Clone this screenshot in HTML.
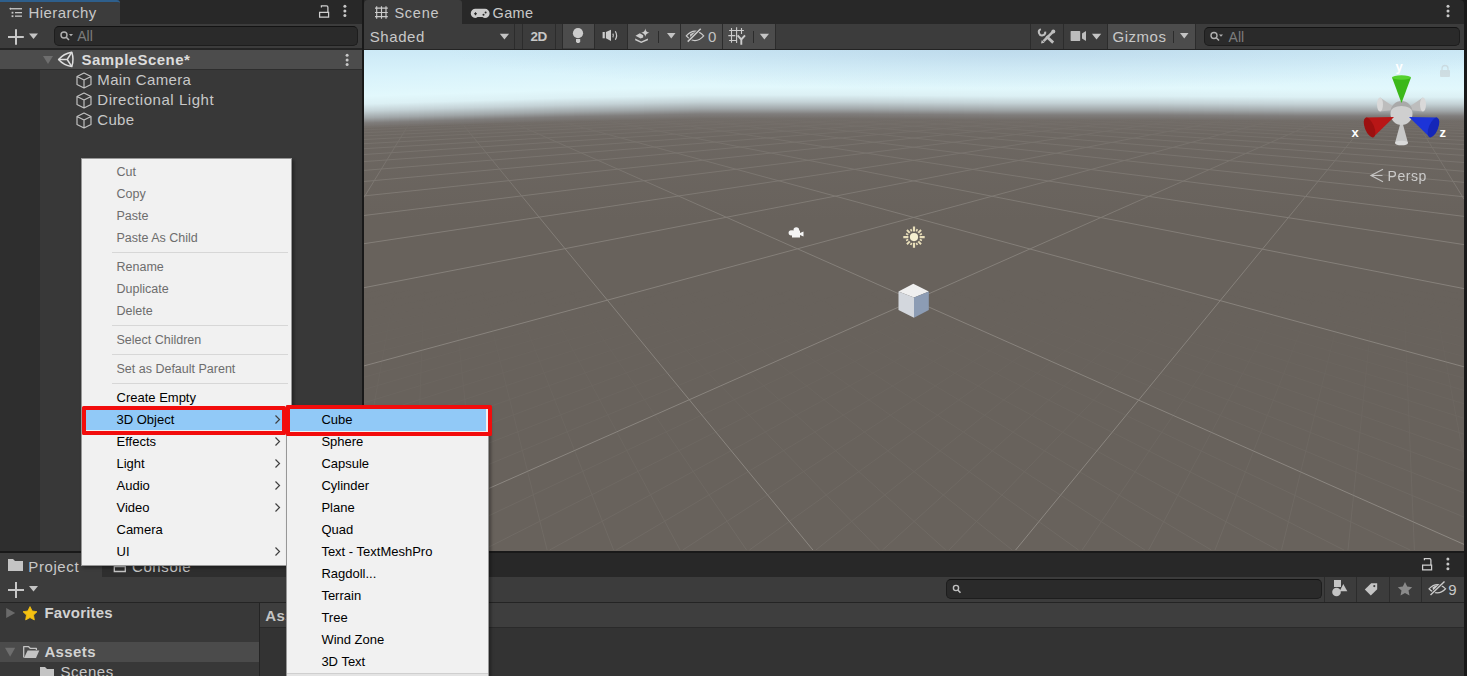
<!DOCTYPE html>
<html><head><meta charset="utf-8">
<style>
*{box-sizing:border-box;margin:0;padding:0}
html,body{width:1467px;height:676px;overflow:hidden}
body{position:relative;background:#191919;font-family:"Liberation Sans",sans-serif;color:#c4c4c4}
.a{position:absolute}
.t{position:absolute;white-space:pre;line-height:1;font-size:14px}
svg{position:absolute;overflow:visible}
.menu{position:absolute;background:#f1f1f1;border:1px solid #979797;box-shadow:2px 2px 3px rgba(0,0,0,0.35)}
.mi{position:absolute;white-space:pre;font-size:13px;line-height:1;color:#000}
.dis{color:#6d6d6d}
.sep{position:absolute;height:1px;background:#d7d7d7}
</style></head><body>

<!-- ================= HIERARCHY ================= -->
<div class="a" style="left:0;top:0;width:362px;height:24px;background:#282828"></div>
<div class="a" style="left:0;top:0;width:120px;height:24px;background:#3c3c3c;border-top:2px solid #2e5f8c;border-top-right-radius:3px"></div>
<svg style="left:0;top:0" width="40" height="24">
  <g fill="#c8c8c8"><path d="M9 8.7l2-1.3v2.6z"/><rect x="10.5" y="8.1" width="11.5" height="1.3"/>
  <rect x="11.6" y="11.8" width="1.8" height="1.8"/><rect x="15" y="12" width="7" height="1.3"/>
  <rect x="11.6" y="15.3" width="1.8" height="1.8"/><rect x="15" y="15.5" width="7" height="1.3"/></g>
</svg>
<svg style="left:0;top:0" width="362" height="24">
  <path d="M319.6 12.4h9v4.6h-9z M327.9 12.4V7.2Q327.9 5.8 326.5 5.8H321.4V7.4" fill="none" stroke="#cfcfcf" stroke-width="1.25"/>
  <g fill="#c8c8c8"><circle cx="344.9" cy="6.3" r="1.5"/><circle cx="344.9" cy="10.9" r="1.5"/><circle cx="344.9" cy="15.5" r="1.5"/></g>
</svg>
<div class="a" style="left:0;top:24px;width:362px;height:25px;background:#3c3c3c;border-bottom:1px solid #242424"></div>
<svg style="left:0;top:24px" width="54" height="25">
  <path d="M16 5.2v15.5M8 13h15.8" stroke="#c8c8c8" stroke-width="2"/>
  <path d="M29 9.5h9l-4.5 5.5z" fill="#c4c4c4"/>
</svg>
<div class="a" style="left:54px;top:26px;width:304px;height:20px;background:#2a2a2a;border:1px solid #1d1d1d;border-top-color:#131313;border-radius:5px"></div>
<svg style="left:54px;top:26px" width="30" height="20">
  <circle cx="10" cy="9" r="3" fill="none" stroke="#b0b0b0" stroke-width="1.4"/>
  <path d="M12 11l3 3" stroke="#b0b0b0" stroke-width="1.6"/>
  <path d="M15 8h4l-2 2.2z" fill="#b0b0b0"/>
</svg>

<div class="a" style="left:0;top:48px;width:362px;height:2px;background:#242424"></div>
<div class="a" style="left:0;top:50px;width:362px;height:20px;background:#4c4c4c;border-bottom:1px solid #2d2d2d"></div>
<svg style="left:0;top:49px" width="362" height="20">
  <path d="M43 7h10l-5 8z" fill="#6e6e6e"/>
  <g fill="none" stroke="#dedede" stroke-width="1.5" stroke-linejoin="round">
    <path d="M58.6 10.5Q63.5 4.6 71.8 3.2Q74.2 10.4 71.8 17.6Q63.5 16.2 58.6 10.5Z"/>
    <path d="M58.6 10.5H67.2L71.8 3.2M67.2 10.5L71.8 17.6"/>
  </g>
  <g fill="#c8c8c8"><circle cx="347.1" cy="6.3" r="1.5"/><circle cx="347.1" cy="10.9" r="1.5"/><circle cx="347.1" cy="15.6" r="1.5"/></g>
</svg>

<div class="a" style="left:0;top:70px;width:40px;height:481px;background:#2e2e2e"></div>
<div class="a" style="left:40px;top:70px;width:322px;height:481px;background:#383838"></div>
<svg style="left:0;top:70px" width="100" height="60">
  <g fill="none" stroke="#c0c0c0" stroke-width="1.2" stroke-linejoin="round"><path transform="translate(76 1.5)" d="M8 1.5L15 5V13L8 16.5L1 13V5Z M1 5L8 8.5L15 5 M8 8.5V16.5"/><path transform="translate(76 21.5)" d="M8 1.5L15 5V13L8 16.5L1 13V5Z M1 5L8 8.5L15 5 M8 8.5V16.5"/><path transform="translate(76 41.5)" d="M8 1.5L15 5V13L8 16.5L1 13V5Z M1 5L8 8.5L15 5 M8 8.5V16.5"/></g>
</svg>

<!-- ================= SCENE ================= -->
<div class="a" style="left:364px;top:0;width:1100px;height:24px;background:#282828;border-top-right-radius:4px"></div>
<div class="a" style="left:364px;top:0;width:98px;height:24px;background:#3c3c3c;border-top-left-radius:4px;border-top-right-radius:3px"></div>
<svg style="left:364px;top:0" width="200" height="24">
  <path d="M12.7 6.3v12.5M17.5 6.3v12.5M22 6.3v12.5M11 8.1h12.8M11 12.5h12.8M11 16.6h12.8" stroke="#cccccc" stroke-width="1.15"/>
  <g fill="#cccccc">
    <path d="M111.5 8.8H121A4.6 4.6 0 0 1 121 18Q119.5 18 118.5 17H113.5Q112.5 18 111.2 18A4.6 4.6 0 0 1 111.5 8.8Z"/>
  </g>
  <g stroke="#282828" stroke-width="1.1"><path d="M111.5 12.2v3M110 13.7h3"/></g>
  <g fill="#282828"><circle cx="119.5" cy="14.7" r="1"/><circle cx="121.6" cy="12.6" r="1"/></g>
</svg>
<svg style="left:1440px;top:0" width="20" height="24">
  <g fill="#c8c8c8"><circle cx="8" cy="6.2" r="1.5"/><circle cx="8" cy="11.1" r="1.5"/><circle cx="8" cy="15.8" r="1.5"/></g>
</svg>

<div class="a" style="left:364px;top:24px;width:1100px;height:26px;background:#3c3c3c;border-bottom:1px solid #232323"></div>
<!-- toolbar dividers & button bgs -->
<div class="a" style="left:514px;top:24px;width:1px;height:25px;background:#2c2c2c"></div>
<div class="a" style="left:522px;top:24px;width:1px;height:25px;background:#2c2c2c"></div>
<div class="a" style="left:555px;top:24px;width:1px;height:25px;background:#2c2c2c"></div>
<div class="a" style="left:562px;top:24px;width:1px;height:25px;background:#2c2c2c"></div>
<div class="a" style="left:563px;top:24px;width:31px;height:24px;background:#4c4c4c"></div>
<div class="a" style="left:594px;top:24px;width:1px;height:25px;background:#2c2c2c"></div>
<div class="a" style="left:627px;top:24px;width:1px;height:25px;background:#2c2c2c"></div>
<div class="a" style="left:628px;top:24px;width:52px;height:25px;background:#4c4c4c"></div>
<div class="a" style="left:680px;top:24px;width:1px;height:25px;background:#2c2c2c"></div>
<div class="a" style="left:681px;top:24px;width:41px;height:25px;background:#4c4c4c"></div>
<div class="a" style="left:722px;top:24px;width:1px;height:25px;background:#2c2c2c"></div>
<div class="a" style="left:723px;top:24px;width:52px;height:25px;background:#4c4c4c"></div>
<div class="a" style="left:775px;top:24px;width:1px;height:25px;background:#2c2c2c"></div>
<div class="a" style="left:1030px;top:24px;width:1px;height:25px;background:#2c2c2c"></div>
<div class="a" style="left:1063px;top:24px;width:1px;height:25px;background:#2c2c2c"></div>
<div class="a" style="left:1107px;top:24px;width:1px;height:25px;background:#2c2c2c"></div>
<div class="a" style="left:1108px;top:24px;width:87px;height:25px;background:#4c4c4c"></div>
<div class="a" style="left:1195px;top:24px;width:1px;height:25px;background:#2c2c2c"></div>


<svg style="left:0;top:24px" width="1467" height="25">
  <g fill="#c4c4c4">
    <path d="M499.8 9.8h9.3l-4.65 5.7z"/>
    <path d="M667 9h8.5l-4.25 5.5z"/>
    <path d="M759.8 9.8h9.2l-4.6 5.6z"/>
    <path d="M1091.9 9.8h9.3l-4.65 5.7z"/>
    <path d="M1180 9h8.5l-4.25 5.5z"/>
  </g>
  <g stroke="#2c2c2c" stroke-width="1"><path d="M658.5 7v12M753.5 7v12M1173.5 7v12"/></g>
  <!-- bulb -->
  <g fill="#cccccc"><circle cx="578" cy="9.2" r="5.1"/><path d="M576 14.9h4.2v2.8l-1.1 1.3h-2l-1.1-1.3z"/></g>
  <!-- audio -->
  <g fill="#cccccc"><rect x="602.6" y="8" width="2.2" height="6.3"/><path d="M605.9 8L611 5.7V17L605.9 14.3Z"/></g>
  <g fill="none" stroke="#cccccc" stroke-width="1.2"><path d="M612.8 9.6q1.3 1.9 0 3.8"/><path d="M615.3 7.2q2.6 4.3 0 8.6"/></g>
  <!-- effects -->
  <g fill="#cccccc"><path d="M635.2 14.6L641.2 17.6L647.9 14.4V16.2L641.2 19L635.2 16.2Z"/><path d="M635.5 11.8L639.8 9.2L643.2 11.2V13.6L640.6 14.6Z"/><path d="M645.3 4.5Q645.8 8.2 649.4 8.8Q645.8 9.4 645.3 12.7Q644.8 9.4 641.2 8.8Q644.8 8.2 645.3 4.5Z"/></g>
  <!-- eye slash -->
  <g fill="none" stroke="#cccccc" stroke-width="1.25"><path d="M686.3 11.9Q695 2.5 703.7 11.9Q695 21.3 686.3 11.9Z"/></g>
  <path d="M690 10.5Q693 7.5 697 8L691.5 14.5Q689.8 12.5 690 10.5Z" fill="#cccccc"/>
  <path d="M687.7 17.6L700.7 4.8" stroke="#4c4c4c" stroke-width="3"/>
  <path d="M687.7 17.6L700.7 4.8" stroke="#cccccc" stroke-width="1.5"/>
  <!-- grid Y -->
  <g stroke="#cccccc" stroke-width="1.1" fill="none"><path d="M731.5 4.1V18.7M736.6 3.2V19M741.5 4V10M729.1 6.5H743.9M728.3 11.6H735.3M729.1 16.5H736.5"/></g>
  <g stroke="#cccccc" stroke-width="1.9" fill="none"><path d="M737.6 11.3L741.3 15.5L745 11.3M741.3 15.2V20.7"/></g>
  <!-- tools -->
  <g stroke="#bdbdbd" fill="none"><path d="M1046.3 12.2L1053.2 18.6" stroke-width="2.8"/><path d="M1052.6 8.2L1043.6 17.2" stroke-width="2.6"/>
  <path d="M1040.8 5.2A3.2 3.2 0 1 0 1045.2 7.6" stroke-width="2"/></g>
  <g fill="#bdbdbd"><circle cx="1053.3" cy="7.6" r="2"/><path d="M1041 19.6L1041.8 16L1044.6 18.8Z"/></g>
  <!-- camera -->
  <g fill="#bdbdbd"><rect x="1070.6" y="7.1" width="9.6" height="9.8" rx="0.6"/><path d="M1082 9.4L1086 7.1V17L1082 14.6Z"/></g>
</svg>

<div class="a" style="left:1204px;top:26.5px;width:256px;height:19.5px;background:#2a2a2a;border:1px solid #1d1d1d;border-top-color:#131313;border-radius:5px"></div>
<svg style="left:1204px;top:27px" width="30" height="19">
  <circle cx="10" cy="8.5" r="3" fill="none" stroke="#b0b0b0" stroke-width="1.4"/>
  <path d="M12 10.5l3 3" stroke="#b0b0b0" stroke-width="1.6"/>
  <path d="M15 7.5h4l-2 2.2z" fill="#b0b0b0"/>
</svg>

<!-- viewport -->
<div class="a" style="left:364px;top:50px;width:1100px;height:501px;overflow:hidden;background:#68625c">
</div>
<svg style="left:0;top:0" width="1467" height="676">
  <defs>
    <linearGradient id="gg" x1="0" y1="0" x2="0" y2="1" gradientUnits="objectBoundingBox">
      <stop offset="0" stop-color="#000"/>
      <stop offset="0.04" stop-color="#101010"/>
      <stop offset="0.0887" stop-color="#6a6a6a"/>
      <stop offset="0.2217" stop-color="#a8a8a8"/>
      <stop offset="0.4435" stop-color="#d8d8d8"/>
      <stop offset="1" stop-color="#fff"/>
    </linearGradient>
    <mask id="gm" maskUnits="userSpaceOnUse" x="364" y="50" width="1100" height="501">
      <rect x="364" y="100" width="1100" height="451" fill="url(#gg)"/>
    </mask>
    <linearGradient id="gg2" x1="0" y1="0" x2="0" y2="1">
      <stop offset="0" stop-color="#000"/>
      <stop offset="0.35" stop-color="#2a2a2a"/>
      <stop offset="1" stop-color="#6a6a6a"/>
    </linearGradient>
    <mask id="gm2" maskUnits="userSpaceOnUse" x="364" y="50" width="1100" height="501">
      <rect x="364" y="290" width="1100" height="261" fill="url(#gg2)"/>
    </mask>
  </defs>
<g mask="url(#gm)" stroke="#8d8882" stroke-width="1" fill="none">
<path d="M426.6 87.3L364.0 95.3 M427.5 87.3L364.0 97.3 M428.5 87.3L364.0 100.4 M429.5 87.3L364.0 106.1 M430.4 87.3L364.0 119.7 M431.4 87.3L364.0 197.4 M432.3 87.3L812.9 550.0 M433.3 87.3L1464.0 544.4 M434.3 87.3L1464.0 366.8 M435.2 87.3L1464.0 288.6 M436.2 87.3L1464.0 244.6 M437.1 87.3L1464.0 216.4 M438.1 87.3L1464.0 196.8 M439.0 87.3L1464.0 182.4 M440.0 87.3L1464.0 171.3 M440.9 87.3L1464.0 162.5 M441.8 87.3L1464.0 155.4 M442.8 87.3L1464.0 149.5 M443.7 87.3L1464.0 144.6 M444.7 87.3L1464.0 140.4 M445.6 87.3L1464.0 136.7 M446.5 87.3L1464.0 133.6 M447.5 87.3L1464.0 130.8 M448.4 87.3L1464.0 128.3 M449.3 87.3L1464.0 126.1 M450.2 87.3L1464.0 124.1 M451.2 87.3L1464.0 122.4 M452.1 87.3L1464.0 120.7 M453.0 87.3L1464.0 119.3 M453.9 87.3L1464.0 117.9 M454.8 87.3L1464.0 116.7 M455.7 87.3L1464.0 115.5 M456.7 87.3L1464.0 114.5 M457.6 87.3L1464.0 113.5 M458.5 87.3L1464.0 112.6 M459.4 87.3L1464.0 111.7 M460.3 87.3L1464.0 110.9 M461.2 87.3L1464.0 110.2 M462.1 87.3L1464.0 109.5 M463.0 87.3L1464.0 108.8 M463.9 87.3L1464.0 108.2 M464.8 87.3L1464.0 107.6 M465.7 87.3L1464.0 107.1 M466.6 87.3L1464.0 106.5 M467.5 87.3L1464.0 106.0 M468.4 87.3L1464.0 105.6 M469.2 87.3L1464.0 105.1 M470.1 87.3L1464.0 104.7 M471.0 87.3L1464.0 104.3 M471.9 87.3L1464.0 103.9 M472.8 87.3L1464.0 103.5 M473.7 87.3L1464.0 103.2 M474.5 87.3L1464.0 102.8 M475.4 87.3L1464.0 102.5 M476.3 87.3L1464.0 102.2 M477.2 87.3L1464.0 101.9 M478.0 87.3L1464.0 101.6 M478.9 87.3L1464.0 101.3 M479.8 87.3L1464.0 101.1 M480.6 87.3L1464.0 100.8 M481.5 87.3L1464.0 100.6 M482.4 87.3L1464.0 100.3 M483.2 87.3L1464.0 100.1 M484.1 87.3L1464.0 99.9 M484.9 87.3L1464.0 99.7 M485.8 87.3L1464.0 99.5 M486.7 87.3L1464.0 99.3 M487.5 87.3L1464.0 99.1 M488.4 87.3L1464.0 98.9 M489.2 87.3L1464.0 98.7 M490.1 87.3L1464.0 98.5 M490.9 87.3L1464.0 98.4 M491.8 87.3L1464.0 98.2 M492.6 87.3L1464.0 98.0 M493.4 87.3L1464.0 97.9 M494.3 87.3L1464.0 97.7 M495.1 87.3L1464.0 97.6 M496.0 87.3L1464.0 97.4 M496.8 87.3L1464.0 97.3 M497.6 87.3L1464.0 97.2 M498.5 87.3L1464.0 97.0 M499.3 87.3L1464.0 96.9 M500.1 87.3L1464.0 96.8 M500.9 87.3L1464.0 96.7 M501.8 87.3L1464.0 96.5 M502.6 87.3L1464.0 96.4 M503.4 87.3L1464.0 96.3 M504.2 87.3L1464.0 96.2 M505.1 87.3L1464.0 96.1 M505.9 87.3L1464.0 96.0 M506.7 87.3L1464.0 95.9 M507.5 87.3L1464.0 95.8 M508.3 87.3L1464.0 95.7 M509.1 87.3L1464.0 95.6 M510.0 87.3L1464.0 95.5 M510.8 87.3L1464.0 95.4 M364.0 96.5L1330.0 87.9 M364.0 96.6L1330.8 87.9 M364.0 96.8L1331.6 87.9 M364.0 96.9L1332.5 87.9 M364.0 97.1L1333.3 87.9 M364.0 97.2L1334.2 87.9 M364.0 97.4L1335.0 87.9 M364.0 97.6L1335.9 87.9 M364.0 97.7L1336.7 87.9 M364.0 97.9L1337.6 87.9 M364.0 98.1L1338.4 87.9 M364.0 98.3L1339.3 87.9 M364.0 98.5L1340.1 87.9 M364.0 98.7L1341.0 87.9 M364.0 98.9L1341.8 87.9 M364.0 99.1L1342.7 87.9 M364.0 99.3L1343.6 87.9 M364.0 99.5L1344.4 87.9 M364.0 99.8L1345.3 87.9 M364.0 100.0L1346.2 87.9 M364.0 100.3L1347.0 88.0 M364.0 100.5L1347.9 88.0 M364.0 100.8L1348.8 88.0 M364.0 101.1L1349.6 88.0 M364.0 101.4L1350.5 88.0 M364.0 101.7L1351.4 88.0 M364.0 102.0L1352.3 88.0 M364.0 102.4L1353.2 88.0 M364.0 102.7L1354.0 88.0 M364.0 103.1L1354.9 88.0 M364.0 103.5L1355.8 88.0 M364.0 103.9L1356.7 88.0 M364.0 104.3L1357.6 88.0 M364.0 104.8L1358.5 88.0 M364.0 105.2L1359.4 88.0 M364.0 105.7L1360.3 88.0 M364.0 106.2L1361.2 88.0 M364.0 106.8L1362.1 88.0 M364.0 107.4L1363.0 88.0 M364.0 108.0L1363.9 88.0 M364.0 108.7L1364.8 88.0 M364.0 109.4L1365.7 88.0 M364.0 110.1L1366.6 88.0 M364.0 110.9L1367.5 88.0 M364.0 111.7L1368.4 88.0 M364.0 112.7L1369.3 88.0 M364.0 113.6L1370.2 88.0 M364.0 114.7L1371.1 88.0 M364.0 115.8L1372.0 88.0 M364.0 117.1L1373.0 88.0 M364.0 118.4L1373.9 88.0 M364.0 119.9L1374.8 88.0 M364.0 121.5L1375.7 88.0 M364.0 123.3L1376.7 88.0 M364.0 125.3L1377.6 88.0 M364.0 127.5L1378.5 88.0 M364.0 129.9L1379.4 88.0 M364.0 132.7L1380.4 88.0 M364.0 135.9L1381.3 88.0 M364.0 139.5L1382.2 88.0 M364.0 143.7L1383.2 88.0 M364.0 148.7L1384.1 88.0 M364.0 154.5L1385.1 88.0 M364.0 161.6L1386.0 88.0 M364.0 170.4L1387.0 88.0 M364.0 181.5L1387.9 88.0 M364.0 195.9L1388.9 88.0 M364.0 215.5L1389.8 88.0 M364.0 243.7L1390.8 88.0 M364.0 287.7L1391.7 88.0 M364.0 365.9L1392.7 88.0 M364.0 543.7L1393.6 88.0 M1015.6 550.0L1394.6 88.0 M1464.0 199.2L1395.6 88.0 M1464.0 121.0L1396.5 88.0 M1464.0 107.1L1397.5 88.0 M1464.0 101.4L1398.5 88.0 M1464.0 98.2L1399.4 88.0 M1464.0 96.2L1400.4 88.0 M1464.0 94.9L1401.4 88.0 M1464.0 93.9L1402.4 88.0 M1464.0 93.1L1403.3 88.0"/>
</g>
<g mask="url(#gm2)" stroke="#7c7771" stroke-width="1" fill="none"><path d="M424.7 87.3L364.0 93.1 M364.0 155.2L1385.2 88.0 M424.8 87.3L364.0 93.2 M364.0 155.8L1385.3 88.0 M424.9 87.3L364.0 93.2 M364.0 156.5L1385.3 88.0 M425.0 87.3L364.0 93.3 M364.0 157.2L1385.4 88.0 M425.1 87.3L364.0 93.4 M364.0 157.9L1385.5 88.0 M425.2 87.3L364.0 93.5 M364.0 158.6L1385.6 88.0 M425.3 87.3L364.0 93.6 M364.0 159.4L1385.7 88.0 M425.4 87.3L364.0 93.7 M364.0 160.1L1385.8 88.0 M425.5 87.3L364.0 93.9 M364.0 160.9L1385.9 88.0 M425.7 87.3L364.0 94.1 M364.0 162.4L1386.1 88.0 M425.8 87.3L364.0 94.2 M364.0 163.2L1386.2 88.0 M425.9 87.3L364.0 94.3 M364.0 164.1L1386.3 88.0 M426.0 87.3L364.0 94.5 M364.0 164.9L1386.4 88.0 M426.1 87.3L364.0 94.6 M364.0 165.8L1386.5 88.0 M426.2 87.3L364.0 94.7 M364.0 166.7L1386.6 88.0 M426.3 87.3L364.0 94.9 M364.0 167.6L1386.7 88.0 M426.4 87.3L364.0 95.0 M364.0 168.5L1386.8 88.0 M426.5 87.3L364.0 95.2 M364.0 169.4L1386.9 88.0 M426.7 87.3L364.0 95.5 M364.0 171.4L1387.1 88.0 M426.8 87.3L364.0 95.7 M364.0 172.4L1387.1 88.0 M426.8 87.3L364.0 95.8 M364.0 173.4L1387.2 88.0 M426.9 87.3L364.0 96.0 M364.0 174.5L1387.3 88.0 M427.0 87.3L364.0 96.2 M364.0 175.6L1387.4 88.0 M427.1 87.3L364.0 96.4 M364.0 176.7L1387.5 88.0 M427.2 87.3L364.0 96.6 M364.0 177.8L1387.6 88.0 M427.3 87.3L364.0 96.8 M364.0 179.0L1387.7 88.0 M427.4 87.3L364.0 97.0 M364.0 180.2L1387.8 88.0 M427.6 87.3L364.0 97.5 M364.0 182.7L1388.0 88.0 M427.7 87.3L364.0 97.8 M364.0 184.0L1388.1 88.0 M427.8 87.3L364.0 98.1 M364.0 185.4L1388.2 88.0 M427.9 87.3L364.0 98.3 M364.0 186.7L1388.3 88.0 M428.0 87.3L364.0 98.6 M364.0 188.2L1388.4 88.0 M428.1 87.3L364.0 99.0 M364.0 189.6L1388.5 88.0 M428.2 87.3L364.0 99.3 M364.0 191.1L1388.6 88.0 M428.3 87.3L364.0 99.6 M364.0 192.7L1388.7 88.0 M428.4 87.3L364.0 100.0 M364.0 194.3L1388.8 88.0 M428.6 87.3L364.0 100.8 M364.0 197.6L1388.9 88.0 M428.7 87.3L364.0 101.3 M364.0 199.3L1389.0 88.0 M428.8 87.3L364.0 101.7 M364.0 201.1L1389.1 88.0 M428.9 87.3L364.0 102.2 M364.0 203.0L1389.2 88.0 M429.0 87.3L364.0 102.8 M364.0 204.9L1389.3 88.0 M429.1 87.3L364.0 103.3 M364.0 206.9L1389.4 88.0 M429.2 87.3L364.0 103.9 M364.0 208.9L1389.5 88.0 M429.3 87.3L364.0 104.6 M364.0 211.0L1389.6 88.0 M429.4 87.3L364.0 105.3 M364.0 213.2L1389.7 88.0 M429.6 87.3L364.0 106.9 M364.0 217.9L1389.9 88.0 M429.7 87.3L364.0 107.8 M364.0 220.3L1390.0 88.0 M429.7 87.3L364.0 108.8 M364.0 222.8L1390.1 88.0 M429.8 87.3L364.0 109.9 M364.0 225.5L1390.2 88.0 M429.9 87.3L364.0 111.1 M364.0 228.2L1390.3 88.0 M430.0 87.3L364.0 112.5 M364.0 231.1L1390.4 88.0 M430.1 87.3L364.0 114.0 M364.0 234.0L1390.5 88.0 M430.2 87.3L364.0 115.7 M364.0 237.1L1390.6 88.0 M430.3 87.3L364.0 117.6 M364.0 240.3L1390.7 88.0 M430.5 87.3L364.0 122.2 M364.0 247.2L1390.9 88.0 M430.6 87.3L364.0 125.1 M364.0 250.9L1390.9 88.0 M430.7 87.3L364.0 128.5 M364.0 254.7L1391.0 88.0 M430.8 87.3L364.0 132.6 M364.0 258.8L1391.1 88.0 M430.9 87.3L364.0 137.6 M364.0 263.0L1391.2 88.0 M431.0 87.3L364.0 143.8 M364.0 267.4L1391.3 88.0 M431.1 87.3L364.0 151.6 M364.0 272.1L1391.4 88.0 M431.2 87.3L364.0 162.0 M364.0 277.0L1391.5 88.0 M431.3 87.3L364.0 176.3 M364.0 282.2L1391.6 88.0 M431.5 87.3L364.0 231.3 M364.0 293.5L1391.8 88.0 M431.6 87.3L364.0 295.1 M364.0 299.6L1391.9 88.0 M431.7 87.3L364.0 460.0 M364.0 306.1L1392.0 88.0 M431.8 87.3L414.2 550.0 M364.0 313.1L1392.1 88.0 M431.9 87.3L480.7 550.0 M364.0 320.4L1392.2 88.0 M432.0 87.3L547.1 550.0 M364.0 328.3L1392.3 88.0 M432.1 87.3L613.6 550.0 M364.0 336.7L1392.4 88.0 M432.2 87.3L680.1 550.0 M364.0 345.7L1392.5 88.0 M432.3 87.3L746.5 550.0 M364.0 355.4L1392.6 88.0 M432.4 87.3L879.4 550.0 M364.0 377.2L1392.8 88.0 M432.5 87.3L945.8 550.0 M364.0 389.5L1392.9 88.0 M432.6 87.3L1012.2 550.0 M364.0 402.8L1393.0 88.0 M432.7 87.3L1078.5 550.0 M364.0 417.4L1393.1 88.0 M432.8 87.3L1144.9 550.0 M364.0 433.3L1393.2 88.0 M432.9 87.3L1211.3 550.0 M364.0 450.9L1393.2 88.0 M433.0 87.3L1277.6 550.0 M364.0 470.4L1393.3 88.0 M433.1 87.3L1343.9 550.0 M364.0 492.1L1393.4 88.0 M433.2 87.3L1410.2 550.0 M364.0 516.3L1393.5 88.0 M433.4 87.3L1464.0 517.1 M416.3 550.0L1393.7 88.0 M433.5 87.3L1464.0 492.9 M483.0 550.0L1393.8 88.0 M433.6 87.3L1464.0 471.3 M549.6 550.0L1393.9 88.0 M433.7 87.3L1464.0 451.8 M616.2 550.0L1394.0 88.0 M433.8 87.3L1464.0 434.2 M682.8 550.0L1394.1 88.0 M433.9 87.3L1464.0 418.3 M749.4 550.0L1394.2 88.0 M434.0 87.3L1464.0 403.7 M815.9 550.0L1394.3 88.0 M434.1 87.3L1464.0 390.4 M882.5 550.0L1394.4 88.0 M434.2 87.3L1464.0 378.1 M949.0 550.0L1394.5 88.0 M434.4 87.3L1464.0 356.4 M1082.1 550.0L1394.7 88.0 M434.5 87.3L1464.0 346.7 M1148.6 550.0L1394.8 88.0 M434.5 87.3L1464.0 337.7 M1215.0 550.0L1394.9 88.0 M434.6 87.3L1464.0 329.3 M1281.5 550.0L1395.0 88.0 M434.7 87.3L1464.0 321.4 M1348.0 550.0L1395.1 88.0 M434.8 87.3L1464.0 314.0 M1414.4 550.0L1395.2 88.0 M434.9 87.3L1464.0 307.1 M1464.0 459.1L1395.3 88.0 M435.0 87.3L1464.0 300.6 M1464.0 296.8L1395.4 88.0 M435.1 87.3L1464.0 294.4 M1464.0 233.1L1395.5 88.0 M435.3 87.3L1464.0 283.2 M1464.0 178.0L1395.7 88.0 M435.4 87.3L1464.0 278.0 M1464.0 163.6L1395.7 88.0 M435.5 87.3L1464.0 273.1 M1464.0 153.2L1395.8 88.0 M435.6 87.3L1464.0 268.4 M1464.0 145.2L1395.9 88.0 M435.7 87.3L1464.0 263.9 M1464.0 139.0L1396.0 88.0 M435.8 87.3L1464.0 259.7 M1464.0 134.0L1396.1 88.0 M435.9 87.3L1464.0 255.7 M1464.0 129.9L1396.2 88.0 M436.0 87.3L1464.0 251.8 M1464.0 126.4L1396.3 88.0 M436.1 87.3L1464.0 248.2 M1464.0 123.5L1396.4 88.0"/></g>
</svg>
<div class="a" style="left:364px;top:50px;width:1100px;height:200px;overflow:hidden">
<div class="a" style="left:0;top:60px;width:1100px;height:140px;background:linear-gradient(to bottom,rgba(125,120,117,0.6) 0px,rgba(118,113,109,0.35) 25px,rgba(102,97,91,0) 110px)"></div>
<div class="a" style="left:0px;top:0;width:5px;height:79px;background:linear-gradient(to bottom,rgba(204,233,246,1) 0.0px,rgba(217,243,251,1) 25.9px,rgba(226,248,252,1) 45.9px,rgba(220,240,244,1) 53.9px,rgba(196,210,214,1) 60.9px,rgba(160,166,168,1) 67.9px,rgba(128,126,125,0.95) 72.9px,rgba(112,107,103,0.3) 77.9px,rgba(110,105,101,0) 80.9px)"></div>
<div class="a" style="left:5px;top:0;width:5px;height:79px;background:linear-gradient(to bottom,rgba(204,233,246,1) 0.0px,rgba(217,243,251,1) 25.8px,rgba(226,248,252,1) 45.8px,rgba(220,240,244,1) 53.8px,rgba(196,210,214,1) 60.8px,rgba(160,166,168,1) 67.8px,rgba(128,126,125,0.95) 72.8px,rgba(112,107,103,0.3) 77.8px,rgba(110,105,101,0) 80.8px)"></div>
<div class="a" style="left:10px;top:0;width:5px;height:79px;background:linear-gradient(to bottom,rgba(204,233,246,1) 0.0px,rgba(217,243,251,1) 25.6px,rgba(226,248,252,1) 45.6px,rgba(220,240,244,1) 53.6px,rgba(196,210,214,1) 60.6px,rgba(160,166,168,1) 67.6px,rgba(128,126,125,0.95) 72.6px,rgba(112,107,103,0.3) 77.6px,rgba(110,105,101,0) 80.6px)"></div>
<div class="a" style="left:15px;top:0;width:5px;height:79px;background:linear-gradient(to bottom,rgba(204,233,246,1) 0.0px,rgba(217,243,251,1) 25.5px,rgba(226,248,252,1) 45.5px,rgba(220,240,244,1) 53.5px,rgba(196,210,214,1) 60.5px,rgba(160,166,168,1) 67.5px,rgba(128,126,125,0.95) 72.5px,rgba(112,107,103,0.3) 77.5px,rgba(110,105,101,0) 80.5px)"></div>
<div class="a" style="left:20px;top:0;width:5px;height:79px;background:linear-gradient(to bottom,rgba(204,233,246,1) 0.0px,rgba(217,243,251,1) 25.3px,rgba(226,248,252,1) 45.3px,rgba(220,240,244,1) 53.3px,rgba(196,210,214,1) 60.3px,rgba(160,166,168,1) 67.3px,rgba(128,126,125,0.95) 72.3px,rgba(112,107,103,0.3) 77.3px,rgba(110,105,101,0) 80.3px)"></div>
<div class="a" style="left:25px;top:0;width:5px;height:79px;background:linear-gradient(to bottom,rgba(204,233,246,1) 0.0px,rgba(217,243,251,1) 25.1px,rgba(226,248,252,1) 45.1px,rgba(220,240,244,1) 53.1px,rgba(196,210,214,1) 60.1px,rgba(160,166,168,1) 67.1px,rgba(128,126,125,0.95) 72.1px,rgba(112,107,103,0.3) 77.1px,rgba(110,105,101,0) 80.1px)"></div>
<div class="a" style="left:30px;top:0;width:5px;height:78px;background:linear-gradient(to bottom,rgba(204,233,246,1) 0.0px,rgba(217,243,251,1) 25.0px,rgba(226,248,252,1) 45.0px,rgba(220,240,244,1) 53.0px,rgba(196,210,214,1) 60.0px,rgba(160,166,168,1) 67.0px,rgba(128,126,125,0.95) 72.0px,rgba(112,107,103,0.3) 77.0px,rgba(110,105,101,0) 80.0px)"></div>
<div class="a" style="left:35px;top:0;width:5px;height:78px;background:linear-gradient(to bottom,rgba(204,233,246,1) 0.0px,rgba(217,243,251,1) 24.8px,rgba(226,248,252,1) 44.8px,rgba(220,240,244,1) 52.8px,rgba(196,210,214,1) 59.8px,rgba(160,166,168,1) 66.8px,rgba(128,126,125,0.95) 71.8px,rgba(112,107,103,0.3) 76.8px,rgba(110,105,101,0) 79.8px)"></div>
<div class="a" style="left:40px;top:0;width:5px;height:78px;background:linear-gradient(to bottom,rgba(204,233,246,1) 0.0px,rgba(217,243,251,1) 24.7px,rgba(226,248,252,1) 44.7px,rgba(220,240,244,1) 52.7px,rgba(196,210,214,1) 59.7px,rgba(160,166,168,1) 66.7px,rgba(128,126,125,0.95) 71.7px,rgba(112,107,103,0.3) 76.7px,rgba(110,105,101,0) 79.7px)"></div>
<div class="a" style="left:45px;top:0;width:5px;height:78px;background:linear-gradient(to bottom,rgba(204,233,246,1) 0.0px,rgba(217,243,251,1) 24.5px,rgba(226,248,252,1) 44.5px,rgba(220,240,244,1) 52.5px,rgba(196,210,214,1) 59.5px,rgba(160,166,168,1) 66.5px,rgba(128,126,125,0.95) 71.5px,rgba(112,107,103,0.3) 76.5px,rgba(110,105,101,0) 79.5px)"></div>
<div class="a" style="left:50px;top:0;width:5px;height:78px;background:linear-gradient(to bottom,rgba(204,233,246,1) 0.0px,rgba(217,243,251,1) 24.4px,rgba(226,248,252,1) 44.4px,rgba(220,240,244,1) 52.4px,rgba(196,210,214,1) 59.4px,rgba(160,166,168,1) 66.4px,rgba(128,126,125,0.95) 71.4px,rgba(112,107,103,0.3) 76.4px,rgba(110,105,101,0) 79.4px)"></div>
<div class="a" style="left:55px;top:0;width:5px;height:78px;background:linear-gradient(to bottom,rgba(204,233,246,1) 0.0px,rgba(217,243,251,1) 24.2px,rgba(226,248,252,1) 44.2px,rgba(220,240,244,1) 52.2px,rgba(196,210,214,1) 59.2px,rgba(160,166,168,1) 66.2px,rgba(128,126,125,0.95) 71.2px,rgba(112,107,103,0.3) 76.2px,rgba(110,105,101,0) 79.2px)"></div>
<div class="a" style="left:60px;top:0;width:5px;height:78px;background:linear-gradient(to bottom,rgba(204,233,246,1) 0.0px,rgba(217,243,251,1) 24.0px,rgba(226,248,252,1) 44.0px,rgba(220,240,244,1) 52.0px,rgba(196,210,214,1) 59.0px,rgba(160,166,168,1) 66.0px,rgba(128,126,125,0.95) 71.0px,rgba(112,107,103,0.3) 76.0px,rgba(110,105,101,0) 79.0px)"></div>
<div class="a" style="left:65px;top:0;width:5px;height:77px;background:linear-gradient(to bottom,rgba(204,233,246,1) 0.0px,rgba(217,243,251,1) 23.9px,rgba(226,248,252,1) 43.9px,rgba(220,240,244,1) 51.9px,rgba(196,210,214,1) 58.9px,rgba(160,166,168,1) 65.9px,rgba(128,126,125,0.95) 70.9px,rgba(112,107,103,0.3) 75.9px,rgba(110,105,101,0) 78.9px)"></div>
<div class="a" style="left:70px;top:0;width:5px;height:77px;background:linear-gradient(to bottom,rgba(204,233,246,1) 0.0px,rgba(217,243,251,1) 23.7px,rgba(226,248,252,1) 43.7px,rgba(220,240,244,1) 51.7px,rgba(196,210,214,1) 58.7px,rgba(160,166,168,1) 65.7px,rgba(128,126,125,0.95) 70.7px,rgba(112,107,103,0.3) 75.7px,rgba(110,105,101,0) 78.7px)"></div>
<div class="a" style="left:75px;top:0;width:5px;height:77px;background:linear-gradient(to bottom,rgba(204,233,246,1) 0.0px,rgba(217,243,251,1) 23.6px,rgba(226,248,252,1) 43.6px,rgba(220,240,244,1) 51.6px,rgba(196,210,214,1) 58.6px,rgba(160,166,168,1) 65.6px,rgba(128,126,125,0.95) 70.6px,rgba(112,107,103,0.3) 75.6px,rgba(110,105,101,0) 78.6px)"></div>
<div class="a" style="left:80px;top:0;width:5px;height:77px;background:linear-gradient(to bottom,rgba(204,233,246,1) 0.0px,rgba(217,243,251,1) 23.4px,rgba(226,248,252,1) 43.4px,rgba(220,240,244,1) 51.4px,rgba(196,210,214,1) 58.4px,rgba(160,166,168,1) 65.4px,rgba(128,126,125,0.95) 70.4px,rgba(112,107,103,0.3) 75.4px,rgba(110,105,101,0) 78.4px)"></div>
<div class="a" style="left:85px;top:0;width:5px;height:77px;background:linear-gradient(to bottom,rgba(204,233,246,1) 0.0px,rgba(217,243,251,1) 23.3px,rgba(226,248,252,1) 43.3px,rgba(220,240,244,1) 51.3px,rgba(196,210,214,1) 58.3px,rgba(160,166,168,1) 65.3px,rgba(128,126,125,0.95) 70.3px,rgba(112,107,103,0.3) 75.3px,rgba(110,105,101,0) 78.3px)"></div>
<div class="a" style="left:90px;top:0;width:5px;height:77px;background:linear-gradient(to bottom,rgba(204,233,246,1) 0.0px,rgba(217,243,251,1) 23.1px,rgba(226,248,252,1) 43.1px,rgba(220,240,244,1) 51.1px,rgba(196,210,214,1) 58.1px,rgba(160,166,168,1) 65.1px,rgba(128,126,125,0.95) 70.1px,rgba(112,107,103,0.3) 75.1px,rgba(110,105,101,0) 78.1px)"></div>
<div class="a" style="left:95px;top:0;width:5px;height:76px;background:linear-gradient(to bottom,rgba(204,233,246,1) 0.0px,rgba(217,243,251,1) 23.0px,rgba(226,248,252,1) 43.0px,rgba(220,240,244,1) 51.0px,rgba(196,210,214,1) 58.0px,rgba(160,166,168,1) 65.0px,rgba(128,126,125,0.95) 70.0px,rgba(112,107,103,0.3) 75.0px,rgba(110,105,101,0) 78.0px)"></div>
<div class="a" style="left:100px;top:0;width:5px;height:76px;background:linear-gradient(to bottom,rgba(204,233,246,1) 0.0px,rgba(217,243,251,1) 22.8px,rgba(226,248,252,1) 42.8px,rgba(220,240,244,1) 50.8px,rgba(196,210,214,1) 57.8px,rgba(160,166,168,1) 64.8px,rgba(128,126,125,0.95) 69.8px,rgba(112,107,103,0.3) 74.8px,rgba(110,105,101,0) 77.8px)"></div>
<div class="a" style="left:105px;top:0;width:5px;height:76px;background:linear-gradient(to bottom,rgba(204,233,246,1) 0.0px,rgba(217,243,251,1) 22.7px,rgba(226,248,252,1) 42.7px,rgba(220,240,244,1) 50.7px,rgba(196,210,214,1) 57.7px,rgba(160,166,168,1) 64.7px,rgba(128,126,125,0.95) 69.7px,rgba(112,107,103,0.3) 74.7px,rgba(110,105,101,0) 77.7px)"></div>
<div class="a" style="left:110px;top:0;width:5px;height:76px;background:linear-gradient(to bottom,rgba(204,233,246,1) 0.0px,rgba(217,243,251,1) 22.5px,rgba(226,248,252,1) 42.5px,rgba(220,240,244,1) 50.5px,rgba(196,210,214,1) 57.5px,rgba(160,166,168,1) 64.5px,rgba(128,126,125,0.95) 69.5px,rgba(112,107,103,0.3) 74.5px,rgba(110,105,101,0) 77.5px)"></div>
<div class="a" style="left:115px;top:0;width:5px;height:76px;background:linear-gradient(to bottom,rgba(204,233,246,1) 0.0px,rgba(217,243,251,1) 22.4px,rgba(226,248,252,1) 42.4px,rgba(220,240,244,1) 50.4px,rgba(196,210,214,1) 57.4px,rgba(160,166,168,1) 64.4px,rgba(128,126,125,0.95) 69.4px,rgba(112,107,103,0.3) 74.4px,rgba(110,105,101,0) 77.4px)"></div>
<div class="a" style="left:120px;top:0;width:5px;height:76px;background:linear-gradient(to bottom,rgba(204,233,246,1) 0.0px,rgba(217,243,251,1) 22.2px,rgba(226,248,252,1) 42.2px,rgba(220,240,244,1) 50.2px,rgba(196,210,214,1) 57.2px,rgba(160,166,168,1) 64.2px,rgba(128,126,125,0.95) 69.2px,rgba(112,107,103,0.3) 74.2px,rgba(110,105,101,0) 77.2px)"></div>
<div class="a" style="left:125px;top:0;width:5px;height:76px;background:linear-gradient(to bottom,rgba(204,233,246,1) 0.0px,rgba(217,243,251,1) 22.1px,rgba(226,248,252,1) 42.1px,rgba(220,240,244,1) 50.1px,rgba(196,210,214,1) 57.1px,rgba(160,166,168,1) 64.1px,rgba(128,126,125,0.95) 69.1px,rgba(112,107,103,0.3) 74.1px,rgba(110,105,101,0) 77.1px)"></div>
<div class="a" style="left:130px;top:0;width:5px;height:75px;background:linear-gradient(to bottom,rgba(204,233,246,1) 0.0px,rgba(217,243,251,1) 21.9px,rgba(226,248,252,1) 41.9px,rgba(220,240,244,1) 49.9px,rgba(196,210,214,1) 56.9px,rgba(160,166,168,1) 63.9px,rgba(128,126,125,0.95) 68.9px,rgba(112,107,103,0.3) 73.9px,rgba(110,105,101,0) 76.9px)"></div>
<div class="a" style="left:135px;top:0;width:5px;height:75px;background:linear-gradient(to bottom,rgba(204,233,246,1) 0.0px,rgba(217,243,251,1) 21.8px,rgba(226,248,252,1) 41.8px,rgba(220,240,244,1) 49.8px,rgba(196,210,214,1) 56.8px,rgba(160,166,168,1) 63.8px,rgba(128,126,125,0.95) 68.8px,rgba(112,107,103,0.3) 73.8px,rgba(110,105,101,0) 76.8px)"></div>
<div class="a" style="left:140px;top:0;width:5px;height:75px;background:linear-gradient(to bottom,rgba(204,233,246,1) 0.0px,rgba(217,243,251,1) 21.6px,rgba(226,248,252,1) 41.6px,rgba(220,240,244,1) 49.6px,rgba(196,210,214,1) 56.6px,rgba(160,166,168,1) 63.6px,rgba(128,126,125,0.95) 68.6px,rgba(112,107,103,0.3) 73.6px,rgba(110,105,101,0) 76.6px)"></div>
<div class="a" style="left:145px;top:0;width:5px;height:75px;background:linear-gradient(to bottom,rgba(204,233,246,1) 0.0px,rgba(217,243,251,1) 21.5px,rgba(226,248,252,1) 41.5px,rgba(220,240,244,1) 49.5px,rgba(196,210,214,1) 56.5px,rgba(160,166,168,1) 63.5px,rgba(128,126,125,0.95) 68.5px,rgba(112,107,103,0.3) 73.5px,rgba(110,105,101,0) 76.5px)"></div>
<div class="a" style="left:150px;top:0;width:5px;height:75px;background:linear-gradient(to bottom,rgba(204,233,246,1) 0.0px,rgba(217,243,251,1) 21.3px,rgba(226,248,252,1) 41.3px,rgba(220,240,244,1) 49.3px,rgba(196,210,214,1) 56.3px,rgba(160,166,168,1) 63.3px,rgba(128,126,125,0.95) 68.3px,rgba(112,107,103,0.3) 73.3px,rgba(110,105,101,0) 76.3px)"></div>
<div class="a" style="left:155px;top:0;width:5px;height:75px;background:linear-gradient(to bottom,rgba(204,233,246,1) 0.0px,rgba(217,243,251,1) 21.2px,rgba(226,248,252,1) 41.2px,rgba(220,240,244,1) 49.2px,rgba(196,210,214,1) 56.2px,rgba(160,166,168,1) 63.2px,rgba(128,126,125,0.95) 68.2px,rgba(112,107,103,0.3) 73.2px,rgba(110,105,101,0) 76.2px)"></div>
<div class="a" style="left:160px;top:0;width:5px;height:75px;background:linear-gradient(to bottom,rgba(204,233,246,1) 0.0px,rgba(217,243,251,1) 21.0px,rgba(226,248,252,1) 41.0px,rgba(220,240,244,1) 49.0px,rgba(196,210,214,1) 56.0px,rgba(160,166,168,1) 63.0px,rgba(128,126,125,0.95) 68.0px,rgba(112,107,103,0.3) 73.0px,rgba(110,105,101,0) 76.0px)"></div>
<div class="a" style="left:165px;top:0;width:5px;height:74px;background:linear-gradient(to bottom,rgba(204,233,246,1) 0.0px,rgba(217,243,251,1) 20.9px,rgba(226,248,252,1) 40.9px,rgba(220,240,244,1) 48.9px,rgba(196,210,214,1) 55.9px,rgba(160,166,168,1) 62.9px,rgba(128,126,125,0.95) 67.9px,rgba(112,107,103,0.3) 72.9px,rgba(110,105,101,0) 75.9px)"></div>
<div class="a" style="left:170px;top:0;width:5px;height:74px;background:linear-gradient(to bottom,rgba(204,233,246,1) 0.0px,rgba(217,243,251,1) 20.7px,rgba(226,248,252,1) 40.7px,rgba(220,240,244,1) 48.7px,rgba(196,210,214,1) 55.7px,rgba(160,166,168,1) 62.7px,rgba(128,126,125,0.95) 67.7px,rgba(112,107,103,0.3) 72.7px,rgba(110,105,101,0) 75.7px)"></div>
<div class="a" style="left:175px;top:0;width:5px;height:74px;background:linear-gradient(to bottom,rgba(204,233,246,1) 0.0px,rgba(217,243,251,1) 20.6px,rgba(226,248,252,1) 40.6px,rgba(220,240,244,1) 48.6px,rgba(196,210,214,1) 55.6px,rgba(160,166,168,1) 62.6px,rgba(128,126,125,0.95) 67.6px,rgba(112,107,103,0.3) 72.6px,rgba(110,105,101,0) 75.6px)"></div>
<div class="a" style="left:180px;top:0;width:5px;height:74px;background:linear-gradient(to bottom,rgba(204,233,246,1) 0.0px,rgba(217,243,251,1) 20.4px,rgba(226,248,252,1) 40.4px,rgba(220,240,244,1) 48.4px,rgba(196,210,214,1) 55.4px,rgba(160,166,168,1) 62.4px,rgba(128,126,125,0.95) 67.4px,rgba(112,107,103,0.3) 72.4px,rgba(110,105,101,0) 75.4px)"></div>
<div class="a" style="left:185px;top:0;width:5px;height:74px;background:linear-gradient(to bottom,rgba(204,233,246,1) 0.0px,rgba(217,243,251,1) 20.3px,rgba(226,248,252,1) 40.3px,rgba(220,240,244,1) 48.3px,rgba(196,210,214,1) 55.3px,rgba(160,166,168,1) 62.3px,rgba(128,126,125,0.95) 67.3px,rgba(112,107,103,0.3) 72.3px,rgba(110,105,101,0) 75.3px)"></div>
<div class="a" style="left:190px;top:0;width:5px;height:74px;background:linear-gradient(to bottom,rgba(204,233,246,1) 0.0px,rgba(217,243,251,1) 20.1px,rgba(226,248,252,1) 40.1px,rgba(220,240,244,1) 48.1px,rgba(196,210,214,1) 55.1px,rgba(160,166,168,1) 62.1px,rgba(128,126,125,0.95) 67.1px,rgba(112,107,103,0.3) 72.1px,rgba(110,105,101,0) 75.1px)"></div>
<div class="a" style="left:195px;top:0;width:5px;height:73px;background:linear-gradient(to bottom,rgba(204,233,246,1) 0.0px,rgba(217,243,251,1) 20.0px,rgba(226,248,252,1) 40.0px,rgba(220,240,244,1) 48.0px,rgba(196,210,214,1) 55.0px,rgba(160,166,168,1) 62.0px,rgba(128,126,125,0.95) 67.0px,rgba(112,107,103,0.3) 72.0px,rgba(110,105,101,0) 75.0px)"></div>
<div class="a" style="left:200px;top:0;width:5px;height:73px;background:linear-gradient(to bottom,rgba(204,233,246,1) 0.0px,rgba(217,243,251,1) 19.9px,rgba(226,248,252,1) 39.9px,rgba(220,240,244,1) 47.9px,rgba(196,210,214,1) 54.9px,rgba(160,166,168,1) 61.9px,rgba(128,126,125,0.95) 66.9px,rgba(112,107,103,0.3) 71.9px,rgba(110,105,101,0) 74.9px)"></div>
<div class="a" style="left:205px;top:0;width:5px;height:73px;background:linear-gradient(to bottom,rgba(204,233,246,1) 0.0px,rgba(217,243,251,1) 19.8px,rgba(226,248,252,1) 39.8px,rgba(220,240,244,1) 47.8px,rgba(196,210,214,1) 54.8px,rgba(160,166,168,1) 61.8px,rgba(128,126,125,0.95) 66.8px,rgba(112,107,103,0.3) 71.8px,rgba(110,105,101,0) 74.8px)"></div>
<div class="a" style="left:210px;top:0;width:5px;height:73px;background:linear-gradient(to bottom,rgba(204,233,246,1) 0.0px,rgba(217,243,251,1) 19.6px,rgba(226,248,252,1) 39.6px,rgba(220,240,244,1) 47.6px,rgba(196,210,214,1) 54.6px,rgba(160,166,168,1) 61.6px,rgba(128,126,125,0.95) 66.6px,rgba(112,107,103,0.3) 71.6px,rgba(110,105,101,0) 74.6px)"></div>
<div class="a" style="left:215px;top:0;width:5px;height:73px;background:linear-gradient(to bottom,rgba(204,233,246,1) 0.0px,rgba(217,243,251,1) 19.5px,rgba(226,248,252,1) 39.5px,rgba(220,240,244,1) 47.5px,rgba(196,210,214,1) 54.5px,rgba(160,166,168,1) 61.5px,rgba(128,126,125,0.95) 66.5px,rgba(112,107,103,0.3) 71.5px,rgba(110,105,101,0) 74.5px)"></div>
<div class="a" style="left:220px;top:0;width:5px;height:73px;background:linear-gradient(to bottom,rgba(204,233,246,1) 0.0px,rgba(217,243,251,1) 19.4px,rgba(226,248,252,1) 39.4px,rgba(220,240,244,1) 47.4px,rgba(196,210,214,1) 54.4px,rgba(160,166,168,1) 61.4px,rgba(128,126,125,0.95) 66.4px,rgba(112,107,103,0.3) 71.4px,rgba(110,105,101,0) 74.4px)"></div>
<div class="a" style="left:225px;top:0;width:5px;height:73px;background:linear-gradient(to bottom,rgba(204,233,246,1) 0.0px,rgba(217,243,251,1) 19.3px,rgba(226,248,252,1) 39.3px,rgba(220,240,244,1) 47.3px,rgba(196,210,214,1) 54.3px,rgba(160,166,168,1) 61.3px,rgba(128,126,125,0.95) 66.3px,rgba(112,107,103,0.3) 71.3px,rgba(110,105,101,0) 74.3px)"></div>
<div class="a" style="left:230px;top:0;width:5px;height:73px;background:linear-gradient(to bottom,rgba(204,233,246,1) 0.0px,rgba(217,243,251,1) 19.2px,rgba(226,248,252,1) 39.2px,rgba(220,240,244,1) 47.2px,rgba(196,210,214,1) 54.2px,rgba(160,166,168,1) 61.2px,rgba(128,126,125,0.95) 66.2px,rgba(112,107,103,0.3) 71.2px,rgba(110,105,101,0) 74.2px)"></div>
<div class="a" style="left:235px;top:0;width:5px;height:73px;background:linear-gradient(to bottom,rgba(204,233,246,1) 0.0px,rgba(217,243,251,1) 19.1px,rgba(226,248,252,1) 39.1px,rgba(220,240,244,1) 47.1px,rgba(196,210,214,1) 54.1px,rgba(160,166,168,1) 61.1px,rgba(128,126,125,0.95) 66.1px,rgba(112,107,103,0.3) 71.1px,rgba(110,105,101,0) 74.1px)"></div>
<div class="a" style="left:240px;top:0;width:5px;height:73px;background:linear-gradient(to bottom,rgba(204,233,246,1) 0.0px,rgba(217,243,251,1) 19.0px,rgba(226,248,252,1) 39.0px,rgba(220,240,244,1) 47.0px,rgba(196,210,214,1) 54.0px,rgba(160,166,168,1) 61.0px,rgba(128,126,125,0.95) 66.0px,rgba(112,107,103,0.3) 71.0px,rgba(110,105,101,0) 74.0px)"></div>
<div class="a" style="left:245px;top:0;width:5px;height:72px;background:linear-gradient(to bottom,rgba(204,233,246,1) 0.0px,rgba(217,243,251,1) 18.9px,rgba(226,248,252,1) 38.9px,rgba(220,240,244,1) 46.9px,rgba(196,210,214,1) 53.9px,rgba(160,166,168,1) 60.9px,rgba(128,126,125,0.95) 65.9px,rgba(112,107,103,0.3) 70.9px,rgba(110,105,101,0) 73.9px)"></div>
<div class="a" style="left:250px;top:0;width:5px;height:72px;background:linear-gradient(to bottom,rgba(204,233,246,1) 0.0px,rgba(217,243,251,1) 18.8px,rgba(226,248,252,1) 38.8px,rgba(220,240,244,1) 46.8px,rgba(196,210,214,1) 53.8px,rgba(160,166,168,1) 60.8px,rgba(128,126,125,0.95) 65.8px,rgba(112,107,103,0.3) 70.8px,rgba(110,105,101,0) 73.8px)"></div>
<div class="a" style="left:255px;top:0;width:5px;height:72px;background:linear-gradient(to bottom,rgba(204,233,246,1) 0.0px,rgba(217,243,251,1) 18.7px,rgba(226,248,252,1) 38.7px,rgba(220,240,244,1) 46.7px,rgba(196,210,214,1) 53.7px,rgba(160,166,168,1) 60.7px,rgba(128,126,125,0.95) 65.7px,rgba(112,107,103,0.3) 70.7px,rgba(110,105,101,0) 73.7px)"></div>
<div class="a" style="left:260px;top:0;width:5px;height:72px;background:linear-gradient(to bottom,rgba(204,233,246,1) 0.0px,rgba(217,243,251,1) 18.6px,rgba(226,248,252,1) 38.6px,rgba(220,240,244,1) 46.6px,rgba(196,210,214,1) 53.6px,rgba(160,166,168,1) 60.6px,rgba(128,126,125,0.95) 65.6px,rgba(112,107,103,0.3) 70.6px,rgba(110,105,101,0) 73.6px)"></div>
<div class="a" style="left:265px;top:0;width:5px;height:72px;background:linear-gradient(to bottom,rgba(204,233,246,1) 0.0px,rgba(217,243,251,1) 18.5px,rgba(226,248,252,1) 38.5px,rgba(220,240,244,1) 46.5px,rgba(196,210,214,1) 53.5px,rgba(160,166,168,1) 60.5px,rgba(128,126,125,0.95) 65.5px,rgba(112,107,103,0.3) 70.5px,rgba(110,105,101,0) 73.5px)"></div>
<div class="a" style="left:270px;top:0;width:5px;height:72px;background:linear-gradient(to bottom,rgba(204,233,246,1) 0.0px,rgba(217,243,251,1) 18.4px,rgba(226,248,252,1) 38.4px,rgba(220,240,244,1) 46.4px,rgba(196,210,214,1) 53.4px,rgba(160,166,168,1) 60.4px,rgba(128,126,125,0.95) 65.4px,rgba(112,107,103,0.3) 70.4px,rgba(110,105,101,0) 73.4px)"></div>
<div class="a" style="left:275px;top:0;width:5px;height:72px;background:linear-gradient(to bottom,rgba(204,233,246,1) 0.0px,rgba(217,243,251,1) 18.3px,rgba(226,248,252,1) 38.3px,rgba(220,240,244,1) 46.3px,rgba(196,210,214,1) 53.3px,rgba(160,166,168,1) 60.3px,rgba(128,126,125,0.95) 65.3px,rgba(112,107,103,0.3) 70.3px,rgba(110,105,101,0) 73.3px)"></div>
<div class="a" style="left:280px;top:0;width:5px;height:72px;background:linear-gradient(to bottom,rgba(204,233,246,1) 0.0px,rgba(217,243,251,1) 18.1px,rgba(226,248,252,1) 38.1px,rgba(220,240,244,1) 46.1px,rgba(196,210,214,1) 53.1px,rgba(160,166,168,1) 60.1px,rgba(128,126,125,0.95) 65.1px,rgba(112,107,103,0.3) 70.1px,rgba(110,105,101,0) 73.1px)"></div>
<div class="a" style="left:285px;top:0;width:5px;height:72px;background:linear-gradient(to bottom,rgba(204,233,246,1) 0.0px,rgba(217,243,251,1) 18.0px,rgba(226,248,252,1) 38.0px,rgba(220,240,244,1) 46.0px,rgba(196,210,214,1) 53.0px,rgba(160,166,168,1) 60.0px,rgba(128,126,125,0.95) 65.0px,rgba(112,107,103,0.3) 70.0px,rgba(110,105,101,0) 73.0px)"></div>
<div class="a" style="left:290px;top:0;width:5px;height:71px;background:linear-gradient(to bottom,rgba(204,233,246,1) 0.0px,rgba(217,243,251,1) 17.9px,rgba(226,248,252,1) 37.9px,rgba(220,240,244,1) 45.9px,rgba(196,210,214,1) 52.9px,rgba(160,166,168,1) 59.9px,rgba(128,126,125,0.95) 64.9px,rgba(112,107,103,0.3) 69.9px,rgba(110,105,101,0) 72.9px)"></div>
<div class="a" style="left:295px;top:0;width:5px;height:71px;background:linear-gradient(to bottom,rgba(204,233,246,1) 0.0px,rgba(217,243,251,1) 17.8px,rgba(226,248,252,1) 37.8px,rgba(220,240,244,1) 45.8px,rgba(196,210,214,1) 52.8px,rgba(160,166,168,1) 59.8px,rgba(128,126,125,0.95) 64.8px,rgba(112,107,103,0.3) 69.8px,rgba(110,105,101,0) 72.8px)"></div>
<div class="a" style="left:300px;top:0;width:5px;height:71px;background:linear-gradient(to bottom,rgba(204,233,246,1) 0.0px,rgba(217,243,251,1) 17.7px,rgba(226,248,252,1) 37.7px,rgba(220,240,244,1) 45.7px,rgba(196,210,214,1) 52.7px,rgba(160,166,168,1) 59.7px,rgba(128,126,125,0.95) 64.7px,rgba(112,107,103,0.3) 69.7px,rgba(110,105,101,0) 72.7px)"></div>
<div class="a" style="left:305px;top:0;width:5px;height:71px;background:linear-gradient(to bottom,rgba(204,233,246,1) 0.0px,rgba(217,243,251,1) 17.6px,rgba(226,248,252,1) 37.6px,rgba(220,240,244,1) 45.6px,rgba(196,210,214,1) 52.6px,rgba(160,166,168,1) 59.6px,rgba(128,126,125,0.95) 64.6px,rgba(112,107,103,0.3) 69.6px,rgba(110,105,101,0) 72.6px)"></div>
<div class="a" style="left:310px;top:0;width:5px;height:71px;background:linear-gradient(to bottom,rgba(204,233,246,1) 0.0px,rgba(217,243,251,1) 17.5px,rgba(226,248,252,1) 37.5px,rgba(220,240,244,1) 45.5px,rgba(196,210,214,1) 52.5px,rgba(160,166,168,1) 59.5px,rgba(128,126,125,0.95) 64.5px,rgba(112,107,103,0.3) 69.5px,rgba(110,105,101,0) 72.5px)"></div>
<div class="a" style="left:315px;top:0;width:5px;height:71px;background:linear-gradient(to bottom,rgba(204,233,246,1) 0.0px,rgba(217,243,251,1) 17.4px,rgba(226,248,252,1) 37.4px,rgba(220,240,244,1) 45.4px,rgba(196,210,214,1) 52.4px,rgba(160,166,168,1) 59.4px,rgba(128,126,125,0.95) 64.4px,rgba(112,107,103,0.3) 69.4px,rgba(110,105,101,0) 72.4px)"></div>
<div class="a" style="left:320px;top:0;width:5px;height:71px;background:linear-gradient(to bottom,rgba(204,233,246,1) 0.0px,rgba(217,243,251,1) 17.3px,rgba(226,248,252,1) 37.3px,rgba(220,240,244,1) 45.3px,rgba(196,210,214,1) 52.3px,rgba(160,166,168,1) 59.3px,rgba(128,126,125,0.95) 64.3px,rgba(112,107,103,0.3) 69.3px,rgba(110,105,101,0) 72.3px)"></div>
<div class="a" style="left:325px;top:0;width:5px;height:71px;background:linear-gradient(to bottom,rgba(204,233,246,1) 0.0px,rgba(217,243,251,1) 17.2px,rgba(226,248,252,1) 37.2px,rgba(220,240,244,1) 45.2px,rgba(196,210,214,1) 52.2px,rgba(160,166,168,1) 59.2px,rgba(128,126,125,0.95) 64.2px,rgba(112,107,103,0.3) 69.2px,rgba(110,105,101,0) 72.2px)"></div>
<div class="a" style="left:330px;top:0;width:5px;height:71px;background:linear-gradient(to bottom,rgba(204,233,246,1) 0.0px,rgba(217,243,251,1) 17.1px,rgba(226,248,252,1) 37.1px,rgba(220,240,244,1) 45.1px,rgba(196,210,214,1) 52.1px,rgba(160,166,168,1) 59.1px,rgba(128,126,125,0.95) 64.1px,rgba(112,107,103,0.3) 69.1px,rgba(110,105,101,0) 72.1px)"></div>
<div class="a" style="left:335px;top:0;width:5px;height:71px;background:linear-gradient(to bottom,rgba(204,233,246,1) 0.0px,rgba(217,243,251,1) 17.0px,rgba(226,248,252,1) 37.0px,rgba(220,240,244,1) 45.0px,rgba(196,210,214,1) 52.0px,rgba(160,166,168,1) 59.0px,rgba(128,126,125,0.95) 64.0px,rgba(112,107,103,0.3) 69.0px,rgba(110,105,101,0) 72.0px)"></div>
<div class="a" style="left:340px;top:0;width:5px;height:71px;background:linear-gradient(to bottom,rgba(204,233,246,1) 0.0px,rgba(217,243,251,1) 17.0px,rgba(226,248,252,1) 37.0px,rgba(220,240,244,1) 45.0px,rgba(196,210,214,1) 52.0px,rgba(160,166,168,1) 59.0px,rgba(128,126,125,0.95) 64.0px,rgba(112,107,103,0.3) 69.0px,rgba(110,105,101,0) 72.0px)"></div>
<div class="a" style="left:345px;top:0;width:5px;height:71px;background:linear-gradient(to bottom,rgba(204,233,246,1) 0.0px,rgba(217,243,251,1) 17.0px,rgba(226,248,252,1) 37.0px,rgba(220,240,244,1) 45.0px,rgba(196,210,214,1) 52.0px,rgba(160,166,168,1) 59.0px,rgba(128,126,125,0.95) 64.0px,rgba(112,107,103,0.3) 69.0px,rgba(110,105,101,0) 72.0px)"></div>
<div class="a" style="left:350px;top:0;width:5px;height:71px;background:linear-gradient(to bottom,rgba(204,233,246,1) 0.0px,rgba(217,243,251,1) 17.0px,rgba(226,248,252,1) 37.0px,rgba(220,240,244,1) 45.0px,rgba(196,210,214,1) 52.0px,rgba(160,166,168,1) 59.0px,rgba(128,126,125,0.95) 64.0px,rgba(112,107,103,0.3) 69.0px,rgba(110,105,101,0) 72.0px)"></div>
<div class="a" style="left:355px;top:0;width:5px;height:71px;background:linear-gradient(to bottom,rgba(204,233,246,1) 0.0px,rgba(217,243,251,1) 17.0px,rgba(226,248,252,1) 37.0px,rgba(220,240,244,1) 45.0px,rgba(196,210,214,1) 52.0px,rgba(160,166,168,1) 59.0px,rgba(128,126,125,0.95) 64.0px,rgba(112,107,103,0.3) 69.0px,rgba(110,105,101,0) 72.0px)"></div>
<div class="a" style="left:360px;top:0;width:5px;height:71px;background:linear-gradient(to bottom,rgba(204,233,246,1) 0.0px,rgba(217,243,251,1) 17.0px,rgba(226,248,252,1) 37.0px,rgba(220,240,244,1) 45.0px,rgba(196,210,214,1) 52.0px,rgba(160,166,168,1) 59.0px,rgba(128,126,125,0.95) 64.0px,rgba(112,107,103,0.3) 69.0px,rgba(110,105,101,0) 72.0px)"></div>
<div class="a" style="left:365px;top:0;width:5px;height:71px;background:linear-gradient(to bottom,rgba(204,233,246,1) 0.0px,rgba(217,243,251,1) 17.0px,rgba(226,248,252,1) 37.0px,rgba(220,240,244,1) 45.0px,rgba(196,210,214,1) 52.0px,rgba(160,166,168,1) 59.0px,rgba(128,126,125,0.95) 64.0px,rgba(112,107,103,0.3) 69.0px,rgba(110,105,101,0) 72.0px)"></div>
<div class="a" style="left:370px;top:0;width:5px;height:71px;background:linear-gradient(to bottom,rgba(204,233,246,1) 0.0px,rgba(217,243,251,1) 17.0px,rgba(226,248,252,1) 37.0px,rgba(220,240,244,1) 45.0px,rgba(196,210,214,1) 52.0px,rgba(160,166,168,1) 59.0px,rgba(128,126,125,0.95) 64.0px,rgba(112,107,103,0.3) 69.0px,rgba(110,105,101,0) 72.0px)"></div>
<div class="a" style="left:375px;top:0;width:5px;height:71px;background:linear-gradient(to bottom,rgba(204,233,246,1) 0.0px,rgba(217,243,251,1) 17.0px,rgba(226,248,252,1) 37.0px,rgba(220,240,244,1) 45.0px,rgba(196,210,214,1) 52.0px,rgba(160,166,168,1) 59.0px,rgba(128,126,125,0.95) 64.0px,rgba(112,107,103,0.3) 69.0px,rgba(110,105,101,0) 72.0px)"></div>
<div class="a" style="left:380px;top:0;width:5px;height:71px;background:linear-gradient(to bottom,rgba(204,233,246,1) 0.0px,rgba(217,243,251,1) 17.0px,rgba(226,248,252,1) 37.0px,rgba(220,240,244,1) 45.0px,rgba(196,210,214,1) 52.0px,rgba(160,166,168,1) 59.0px,rgba(128,126,125,0.95) 64.0px,rgba(112,107,103,0.3) 69.0px,rgba(110,105,101,0) 72.0px)"></div>
<div class="a" style="left:385px;top:0;width:5px;height:71px;background:linear-gradient(to bottom,rgba(204,233,246,1) 0.0px,rgba(217,243,251,1) 17.0px,rgba(226,248,252,1) 37.0px,rgba(220,240,244,1) 45.0px,rgba(196,210,214,1) 52.0px,rgba(160,166,168,1) 59.0px,rgba(128,126,125,0.95) 64.0px,rgba(112,107,103,0.3) 69.0px,rgba(110,105,101,0) 72.0px)"></div>
<div class="a" style="left:390px;top:0;width:5px;height:71px;background:linear-gradient(to bottom,rgba(204,233,246,1) 0.0px,rgba(217,243,251,1) 17.0px,rgba(226,248,252,1) 37.0px,rgba(220,240,244,1) 45.0px,rgba(196,210,214,1) 52.0px,rgba(160,166,168,1) 59.0px,rgba(128,126,125,0.95) 64.0px,rgba(112,107,103,0.3) 69.0px,rgba(110,105,101,0) 72.0px)"></div>
<div class="a" style="left:395px;top:0;width:5px;height:71px;background:linear-gradient(to bottom,rgba(204,233,246,1) 0.0px,rgba(217,243,251,1) 17.0px,rgba(226,248,252,1) 37.0px,rgba(220,240,244,1) 45.0px,rgba(196,210,214,1) 52.0px,rgba(160,166,168,1) 59.0px,rgba(128,126,125,0.95) 64.0px,rgba(112,107,103,0.3) 69.0px,rgba(110,105,101,0) 72.0px)"></div>
<div class="a" style="left:400px;top:0;width:5px;height:71px;background:linear-gradient(to bottom,rgba(204,233,246,1) 0.0px,rgba(217,243,251,1) 17.0px,rgba(226,248,252,1) 37.0px,rgba(220,240,244,1) 45.0px,rgba(196,210,214,1) 52.0px,rgba(160,166,168,1) 59.0px,rgba(128,126,125,0.95) 64.0px,rgba(112,107,103,0.3) 69.0px,rgba(110,105,101,0) 72.0px)"></div>
<div class="a" style="left:405px;top:0;width:5px;height:71px;background:linear-gradient(to bottom,rgba(204,233,246,1) 0.0px,rgba(217,243,251,1) 17.0px,rgba(226,248,252,1) 37.0px,rgba(220,240,244,1) 45.0px,rgba(196,210,214,1) 52.0px,rgba(160,166,168,1) 59.0px,rgba(128,126,125,0.95) 64.0px,rgba(112,107,103,0.3) 69.0px,rgba(110,105,101,0) 72.0px)"></div>
<div class="a" style="left:410px;top:0;width:5px;height:71px;background:linear-gradient(to bottom,rgba(204,233,246,1) 0.0px,rgba(217,243,251,1) 17.0px,rgba(226,248,252,1) 37.0px,rgba(220,240,244,1) 45.0px,rgba(196,210,214,1) 52.0px,rgba(160,166,168,1) 59.0px,rgba(128,126,125,0.95) 64.0px,rgba(112,107,103,0.3) 69.0px,rgba(110,105,101,0) 72.0px)"></div>
<div class="a" style="left:415px;top:0;width:5px;height:71px;background:linear-gradient(to bottom,rgba(204,233,246,1) 0.0px,rgba(217,243,251,1) 17.0px,rgba(226,248,252,1) 37.0px,rgba(220,240,244,1) 45.0px,rgba(196,210,214,1) 52.0px,rgba(160,166,168,1) 59.0px,rgba(128,126,125,0.95) 64.0px,rgba(112,107,103,0.3) 69.0px,rgba(110,105,101,0) 72.0px)"></div>
<div class="a" style="left:420px;top:0;width:5px;height:71px;background:linear-gradient(to bottom,rgba(204,233,246,1) 0.0px,rgba(217,243,251,1) 17.0px,rgba(226,248,252,1) 37.0px,rgba(220,240,244,1) 45.0px,rgba(196,210,214,1) 52.0px,rgba(160,166,168,1) 59.0px,rgba(128,126,125,0.95) 64.0px,rgba(112,107,103,0.3) 69.0px,rgba(110,105,101,0) 72.0px)"></div>
<div class="a" style="left:425px;top:0;width:5px;height:71px;background:linear-gradient(to bottom,rgba(204,233,246,1) 0.0px,rgba(217,243,251,1) 17.0px,rgba(226,248,252,1) 37.0px,rgba(220,240,244,1) 45.0px,rgba(196,210,214,1) 52.0px,rgba(160,166,168,1) 59.0px,rgba(128,126,125,0.95) 64.0px,rgba(112,107,103,0.3) 69.0px,rgba(110,105,101,0) 72.0px)"></div>
<div class="a" style="left:430px;top:0;width:5px;height:71px;background:linear-gradient(to bottom,rgba(204,233,246,1) 0.0px,rgba(217,243,251,1) 17.0px,rgba(226,248,252,1) 37.0px,rgba(220,240,244,1) 45.0px,rgba(196,210,214,1) 52.0px,rgba(160,166,168,1) 59.0px,rgba(128,126,125,0.95) 64.0px,rgba(112,107,103,0.3) 69.0px,rgba(110,105,101,0) 72.0px)"></div>
<div class="a" style="left:435px;top:0;width:5px;height:71px;background:linear-gradient(to bottom,rgba(204,233,246,1) 0.0px,rgba(217,243,251,1) 17.0px,rgba(226,248,252,1) 37.0px,rgba(220,240,244,1) 45.0px,rgba(196,210,214,1) 52.0px,rgba(160,166,168,1) 59.0px,rgba(128,126,125,0.95) 64.0px,rgba(112,107,103,0.3) 69.0px,rgba(110,105,101,0) 72.0px)"></div>
<div class="a" style="left:440px;top:0;width:5px;height:71px;background:linear-gradient(to bottom,rgba(204,233,246,1) 0.0px,rgba(217,243,251,1) 17.0px,rgba(226,248,252,1) 37.0px,rgba(220,240,244,1) 45.0px,rgba(196,210,214,1) 52.0px,rgba(160,166,168,1) 59.0px,rgba(128,126,125,0.95) 64.0px,rgba(112,107,103,0.3) 69.0px,rgba(110,105,101,0) 72.0px)"></div>
<div class="a" style="left:445px;top:0;width:5px;height:71px;background:linear-gradient(to bottom,rgba(204,233,246,1) 0.0px,rgba(217,243,251,1) 17.0px,rgba(226,248,252,1) 37.0px,rgba(220,240,244,1) 45.0px,rgba(196,210,214,1) 52.0px,rgba(160,166,168,1) 59.0px,rgba(128,126,125,0.95) 64.0px,rgba(112,107,103,0.3) 69.0px,rgba(110,105,101,0) 72.0px)"></div>
<div class="a" style="left:450px;top:0;width:5px;height:71px;background:linear-gradient(to bottom,rgba(204,233,246,1) 0.0px,rgba(217,243,251,1) 17.0px,rgba(226,248,252,1) 37.0px,rgba(220,240,244,1) 45.0px,rgba(196,210,214,1) 52.0px,rgba(160,166,168,1) 59.0px,rgba(128,126,125,0.95) 64.0px,rgba(112,107,103,0.3) 69.0px,rgba(110,105,101,0) 72.0px)"></div>
<div class="a" style="left:455px;top:0;width:5px;height:71px;background:linear-gradient(to bottom,rgba(204,233,246,1) 0.0px,rgba(217,243,251,1) 17.0px,rgba(226,248,252,1) 37.0px,rgba(220,240,244,1) 45.0px,rgba(196,210,214,1) 52.0px,rgba(160,166,168,1) 59.0px,rgba(128,126,125,0.95) 64.0px,rgba(112,107,103,0.3) 69.0px,rgba(110,105,101,0) 72.0px)"></div>
<div class="a" style="left:460px;top:0;width:5px;height:71px;background:linear-gradient(to bottom,rgba(204,233,246,1) 0.0px,rgba(217,243,251,1) 17.0px,rgba(226,248,252,1) 37.0px,rgba(220,240,244,1) 45.0px,rgba(196,210,214,1) 52.0px,rgba(160,166,168,1) 59.0px,rgba(128,126,125,0.95) 64.0px,rgba(112,107,103,0.3) 69.0px,rgba(110,105,101,0) 72.0px)"></div>
<div class="a" style="left:465px;top:0;width:5px;height:71px;background:linear-gradient(to bottom,rgba(204,233,246,1) 0.0px,rgba(217,243,251,1) 17.0px,rgba(226,248,252,1) 37.0px,rgba(220,240,244,1) 45.0px,rgba(196,210,214,1) 52.0px,rgba(160,166,168,1) 59.0px,rgba(128,126,125,0.95) 64.0px,rgba(112,107,103,0.3) 69.0px,rgba(110,105,101,0) 72.0px)"></div>
<div class="a" style="left:470px;top:0;width:5px;height:71px;background:linear-gradient(to bottom,rgba(204,233,246,1) 0.0px,rgba(217,243,251,1) 17.0px,rgba(226,248,252,1) 37.0px,rgba(220,240,244,1) 45.0px,rgba(196,210,214,1) 52.0px,rgba(160,166,168,1) 59.0px,rgba(128,126,125,0.95) 64.0px,rgba(112,107,103,0.3) 69.0px,rgba(110,105,101,0) 72.0px)"></div>
<div class="a" style="left:475px;top:0;width:5px;height:71px;background:linear-gradient(to bottom,rgba(204,233,246,1) 0.0px,rgba(217,243,251,1) 17.0px,rgba(226,248,252,1) 37.0px,rgba(220,240,244,1) 45.0px,rgba(196,210,214,1) 52.0px,rgba(160,166,168,1) 59.0px,rgba(128,126,125,0.95) 64.0px,rgba(112,107,103,0.3) 69.0px,rgba(110,105,101,0) 72.0px)"></div>
<div class="a" style="left:480px;top:0;width:5px;height:71px;background:linear-gradient(to bottom,rgba(204,233,246,1) 0.0px,rgba(217,243,251,1) 17.0px,rgba(226,248,252,1) 37.0px,rgba(220,240,244,1) 45.0px,rgba(196,210,214,1) 52.0px,rgba(160,166,168,1) 59.0px,rgba(128,126,125,0.95) 64.0px,rgba(112,107,103,0.3) 69.0px,rgba(110,105,101,0) 72.0px)"></div>
<div class="a" style="left:485px;top:0;width:5px;height:71px;background:linear-gradient(to bottom,rgba(204,233,246,1) 0.0px,rgba(217,243,251,1) 17.0px,rgba(226,248,252,1) 37.0px,rgba(220,240,244,1) 45.0px,rgba(196,210,214,1) 52.0px,rgba(160,166,168,1) 59.0px,rgba(128,126,125,0.95) 64.0px,rgba(112,107,103,0.3) 69.0px,rgba(110,105,101,0) 72.0px)"></div>
<div class="a" style="left:490px;top:0;width:5px;height:71px;background:linear-gradient(to bottom,rgba(204,233,246,1) 0.0px,rgba(217,243,251,1) 17.0px,rgba(226,248,252,1) 37.0px,rgba(220,240,244,1) 45.0px,rgba(196,210,214,1) 52.0px,rgba(160,166,168,1) 59.0px,rgba(128,126,125,0.95) 64.0px,rgba(112,107,103,0.3) 69.0px,rgba(110,105,101,0) 72.0px)"></div>
<div class="a" style="left:495px;top:0;width:5px;height:71px;background:linear-gradient(to bottom,rgba(204,233,246,1) 0.0px,rgba(217,243,251,1) 17.1px,rgba(226,248,252,1) 37.1px,rgba(220,240,244,1) 45.1px,rgba(196,210,214,1) 52.1px,rgba(160,166,168,1) 59.1px,rgba(128,126,125,0.95) 64.1px,rgba(112,107,103,0.3) 69.1px,rgba(110,105,101,0) 72.1px)"></div>
<div class="a" style="left:500px;top:0;width:5px;height:71px;background:linear-gradient(to bottom,rgba(204,233,246,1) 0.0px,rgba(217,243,251,1) 17.1px,rgba(226,248,252,1) 37.1px,rgba(220,240,244,1) 45.1px,rgba(196,210,214,1) 52.1px,rgba(160,166,168,1) 59.1px,rgba(128,126,125,0.95) 64.1px,rgba(112,107,103,0.3) 69.1px,rgba(110,105,101,0) 72.1px)"></div>
<div class="a" style="left:505px;top:0;width:5px;height:71px;background:linear-gradient(to bottom,rgba(204,233,246,1) 0.0px,rgba(217,243,251,1) 17.1px,rgba(226,248,252,1) 37.1px,rgba(220,240,244,1) 45.1px,rgba(196,210,214,1) 52.1px,rgba(160,166,168,1) 59.1px,rgba(128,126,125,0.95) 64.1px,rgba(112,107,103,0.3) 69.1px,rgba(110,105,101,0) 72.1px)"></div>
<div class="a" style="left:510px;top:0;width:5px;height:71px;background:linear-gradient(to bottom,rgba(204,233,246,1) 0.0px,rgba(217,243,251,1) 17.2px,rgba(226,248,252,1) 37.2px,rgba(220,240,244,1) 45.2px,rgba(196,210,214,1) 52.2px,rgba(160,166,168,1) 59.2px,rgba(128,126,125,0.95) 64.2px,rgba(112,107,103,0.3) 69.2px,rgba(110,105,101,0) 72.2px)"></div>
<div class="a" style="left:515px;top:0;width:5px;height:71px;background:linear-gradient(to bottom,rgba(204,233,246,1) 0.0px,rgba(217,243,251,1) 17.2px,rgba(226,248,252,1) 37.2px,rgba(220,240,244,1) 45.2px,rgba(196,210,214,1) 52.2px,rgba(160,166,168,1) 59.2px,rgba(128,126,125,0.95) 64.2px,rgba(112,107,103,0.3) 69.2px,rgba(110,105,101,0) 72.2px)"></div>
<div class="a" style="left:520px;top:0;width:5px;height:71px;background:linear-gradient(to bottom,rgba(204,233,246,1) 0.0px,rgba(217,243,251,1) 17.2px,rgba(226,248,252,1) 37.2px,rgba(220,240,244,1) 45.2px,rgba(196,210,214,1) 52.2px,rgba(160,166,168,1) 59.2px,rgba(128,126,125,0.95) 64.2px,rgba(112,107,103,0.3) 69.2px,rgba(110,105,101,0) 72.2px)"></div>
<div class="a" style="left:525px;top:0;width:5px;height:71px;background:linear-gradient(to bottom,rgba(204,233,246,1) 0.0px,rgba(217,243,251,1) 17.3px,rgba(226,248,252,1) 37.3px,rgba(220,240,244,1) 45.3px,rgba(196,210,214,1) 52.3px,rgba(160,166,168,1) 59.3px,rgba(128,126,125,0.95) 64.3px,rgba(112,107,103,0.3) 69.3px,rgba(110,105,101,0) 72.3px)"></div>
<div class="a" style="left:530px;top:0;width:5px;height:71px;background:linear-gradient(to bottom,rgba(204,233,246,1) 0.0px,rgba(217,243,251,1) 17.3px,rgba(226,248,252,1) 37.3px,rgba(220,240,244,1) 45.3px,rgba(196,210,214,1) 52.3px,rgba(160,166,168,1) 59.3px,rgba(128,126,125,0.95) 64.3px,rgba(112,107,103,0.3) 69.3px,rgba(110,105,101,0) 72.3px)"></div>
<div class="a" style="left:535px;top:0;width:5px;height:71px;background:linear-gradient(to bottom,rgba(204,233,246,1) 0.0px,rgba(217,243,251,1) 17.3px,rgba(226,248,252,1) 37.3px,rgba(220,240,244,1) 45.3px,rgba(196,210,214,1) 52.3px,rgba(160,166,168,1) 59.3px,rgba(128,126,125,0.95) 64.3px,rgba(112,107,103,0.3) 69.3px,rgba(110,105,101,0) 72.3px)"></div>
<div class="a" style="left:540px;top:0;width:5px;height:71px;background:linear-gradient(to bottom,rgba(204,233,246,1) 0.0px,rgba(217,243,251,1) 17.4px,rgba(226,248,252,1) 37.4px,rgba(220,240,244,1) 45.4px,rgba(196,210,214,1) 52.4px,rgba(160,166,168,1) 59.4px,rgba(128,126,125,0.95) 64.4px,rgba(112,107,103,0.3) 69.4px,rgba(110,105,101,0) 72.4px)"></div>
<div class="a" style="left:545px;top:0;width:5px;height:71px;background:linear-gradient(to bottom,rgba(204,233,246,1) 0.0px,rgba(217,243,251,1) 17.4px,rgba(226,248,252,1) 37.4px,rgba(220,240,244,1) 45.4px,rgba(196,210,214,1) 52.4px,rgba(160,166,168,1) 59.4px,rgba(128,126,125,0.95) 64.4px,rgba(112,107,103,0.3) 69.4px,rgba(110,105,101,0) 72.4px)"></div>
<div class="a" style="left:550px;top:0;width:5px;height:71px;background:linear-gradient(to bottom,rgba(204,233,246,1) 0.0px,rgba(217,243,251,1) 17.4px,rgba(226,248,252,1) 37.4px,rgba(220,240,244,1) 45.4px,rgba(196,210,214,1) 52.4px,rgba(160,166,168,1) 59.4px,rgba(128,126,125,0.95) 64.4px,rgba(112,107,103,0.3) 69.4px,rgba(110,105,101,0) 72.4px)"></div>
<div class="a" style="left:555px;top:0;width:5px;height:71px;background:linear-gradient(to bottom,rgba(204,233,246,1) 0.0px,rgba(217,243,251,1) 17.5px,rgba(226,248,252,1) 37.5px,rgba(220,240,244,1) 45.5px,rgba(196,210,214,1) 52.5px,rgba(160,166,168,1) 59.5px,rgba(128,126,125,0.95) 64.5px,rgba(112,107,103,0.3) 69.5px,rgba(110,105,101,0) 72.5px)"></div>
<div class="a" style="left:560px;top:0;width:5px;height:71px;background:linear-gradient(to bottom,rgba(204,233,246,1) 0.0px,rgba(217,243,251,1) 17.5px,rgba(226,248,252,1) 37.5px,rgba(220,240,244,1) 45.5px,rgba(196,210,214,1) 52.5px,rgba(160,166,168,1) 59.5px,rgba(128,126,125,0.95) 64.5px,rgba(112,107,103,0.3) 69.5px,rgba(110,105,101,0) 72.5px)"></div>
<div class="a" style="left:565px;top:0;width:5px;height:71px;background:linear-gradient(to bottom,rgba(204,233,246,1) 0.0px,rgba(217,243,251,1) 17.5px,rgba(226,248,252,1) 37.5px,rgba(220,240,244,1) 45.5px,rgba(196,210,214,1) 52.5px,rgba(160,166,168,1) 59.5px,rgba(128,126,125,0.95) 64.5px,rgba(112,107,103,0.3) 69.5px,rgba(110,105,101,0) 72.5px)"></div>
<div class="a" style="left:570px;top:0;width:5px;height:71px;background:linear-gradient(to bottom,rgba(204,233,246,1) 0.0px,rgba(217,243,251,1) 17.6px,rgba(226,248,252,1) 37.6px,rgba(220,240,244,1) 45.6px,rgba(196,210,214,1) 52.6px,rgba(160,166,168,1) 59.6px,rgba(128,126,125,0.95) 64.6px,rgba(112,107,103,0.3) 69.6px,rgba(110,105,101,0) 72.6px)"></div>
<div class="a" style="left:575px;top:0;width:5px;height:71px;background:linear-gradient(to bottom,rgba(204,233,246,1) 0.0px,rgba(217,243,251,1) 17.6px,rgba(226,248,252,1) 37.6px,rgba(220,240,244,1) 45.6px,rgba(196,210,214,1) 52.6px,rgba(160,166,168,1) 59.6px,rgba(128,126,125,0.95) 64.6px,rgba(112,107,103,0.3) 69.6px,rgba(110,105,101,0) 72.6px)"></div>
<div class="a" style="left:580px;top:0;width:5px;height:71px;background:linear-gradient(to bottom,rgba(204,233,246,1) 0.0px,rgba(217,243,251,1) 17.6px,rgba(226,248,252,1) 37.6px,rgba(220,240,244,1) 45.6px,rgba(196,210,214,1) 52.6px,rgba(160,166,168,1) 59.6px,rgba(128,126,125,0.95) 64.6px,rgba(112,107,103,0.3) 69.6px,rgba(110,105,101,0) 72.6px)"></div>
<div class="a" style="left:585px;top:0;width:5px;height:71px;background:linear-gradient(to bottom,rgba(204,233,246,1) 0.0px,rgba(217,243,251,1) 17.7px,rgba(226,248,252,1) 37.7px,rgba(220,240,244,1) 45.7px,rgba(196,210,214,1) 52.7px,rgba(160,166,168,1) 59.7px,rgba(128,126,125,0.95) 64.7px,rgba(112,107,103,0.3) 69.7px,rgba(110,105,101,0) 72.7px)"></div>
<div class="a" style="left:590px;top:0;width:5px;height:71px;background:linear-gradient(to bottom,rgba(204,233,246,1) 0.0px,rgba(217,243,251,1) 17.7px,rgba(226,248,252,1) 37.7px,rgba(220,240,244,1) 45.7px,rgba(196,210,214,1) 52.7px,rgba(160,166,168,1) 59.7px,rgba(128,126,125,0.95) 64.7px,rgba(112,107,103,0.3) 69.7px,rgba(110,105,101,0) 72.7px)"></div>
<div class="a" style="left:595px;top:0;width:5px;height:71px;background:linear-gradient(to bottom,rgba(204,233,246,1) 0.0px,rgba(217,243,251,1) 17.7px,rgba(226,248,252,1) 37.7px,rgba(220,240,244,1) 45.7px,rgba(196,210,214,1) 52.7px,rgba(160,166,168,1) 59.7px,rgba(128,126,125,0.95) 64.7px,rgba(112,107,103,0.3) 69.7px,rgba(110,105,101,0) 72.7px)"></div>
<div class="a" style="left:600px;top:0;width:5px;height:71px;background:linear-gradient(to bottom,rgba(204,233,246,1) 0.0px,rgba(217,243,251,1) 17.8px,rgba(226,248,252,1) 37.8px,rgba(220,240,244,1) 45.8px,rgba(196,210,214,1) 52.8px,rgba(160,166,168,1) 59.8px,rgba(128,126,125,0.95) 64.8px,rgba(112,107,103,0.3) 69.8px,rgba(110,105,101,0) 72.8px)"></div>
<div class="a" style="left:605px;top:0;width:5px;height:71px;background:linear-gradient(to bottom,rgba(204,233,246,1) 0.0px,rgba(217,243,251,1) 17.8px,rgba(226,248,252,1) 37.8px,rgba(220,240,244,1) 45.8px,rgba(196,210,214,1) 52.8px,rgba(160,166,168,1) 59.8px,rgba(128,126,125,0.95) 64.8px,rgba(112,107,103,0.3) 69.8px,rgba(110,105,101,0) 72.8px)"></div>
<div class="a" style="left:610px;top:0;width:5px;height:71px;background:linear-gradient(to bottom,rgba(204,233,246,1) 0.0px,rgba(217,243,251,1) 17.8px,rgba(226,248,252,1) 37.8px,rgba(220,240,244,1) 45.8px,rgba(196,210,214,1) 52.8px,rgba(160,166,168,1) 59.8px,rgba(128,126,125,0.95) 64.8px,rgba(112,107,103,0.3) 69.8px,rgba(110,105,101,0) 72.8px)"></div>
<div class="a" style="left:615px;top:0;width:5px;height:71px;background:linear-gradient(to bottom,rgba(204,233,246,1) 0.0px,rgba(217,243,251,1) 17.9px,rgba(226,248,252,1) 37.9px,rgba(220,240,244,1) 45.9px,rgba(196,210,214,1) 52.9px,rgba(160,166,168,1) 59.9px,rgba(128,126,125,0.95) 64.9px,rgba(112,107,103,0.3) 69.9px,rgba(110,105,101,0) 72.9px)"></div>
<div class="a" style="left:620px;top:0;width:5px;height:71px;background:linear-gradient(to bottom,rgba(204,233,246,1) 0.0px,rgba(217,243,251,1) 17.9px,rgba(226,248,252,1) 37.9px,rgba(220,240,244,1) 45.9px,rgba(196,210,214,1) 52.9px,rgba(160,166,168,1) 59.9px,rgba(128,126,125,0.95) 64.9px,rgba(112,107,103,0.3) 69.9px,rgba(110,105,101,0) 72.9px)"></div>
<div class="a" style="left:625px;top:0;width:5px;height:71px;background:linear-gradient(to bottom,rgba(204,233,246,1) 0.0px,rgba(217,243,251,1) 17.9px,rgba(226,248,252,1) 37.9px,rgba(220,240,244,1) 45.9px,rgba(196,210,214,1) 52.9px,rgba(160,166,168,1) 59.9px,rgba(128,126,125,0.95) 64.9px,rgba(112,107,103,0.3) 69.9px,rgba(110,105,101,0) 72.9px)"></div>
<div class="a" style="left:630px;top:0;width:5px;height:71px;background:linear-gradient(to bottom,rgba(204,233,246,1) 0.0px,rgba(217,243,251,1) 18.0px,rgba(226,248,252,1) 38.0px,rgba(220,240,244,1) 46.0px,rgba(196,210,214,1) 53.0px,rgba(160,166,168,1) 60.0px,rgba(128,126,125,0.95) 65.0px,rgba(112,107,103,0.3) 70.0px,rgba(110,105,101,0) 73.0px)"></div>
<div class="a" style="left:635px;top:0;width:5px;height:72px;background:linear-gradient(to bottom,rgba(204,233,246,1) 0.0px,rgba(217,243,251,1) 18.0px,rgba(226,248,252,1) 38.0px,rgba(220,240,244,1) 46.0px,rgba(196,210,214,1) 53.0px,rgba(160,166,168,1) 60.0px,rgba(128,126,125,0.95) 65.0px,rgba(112,107,103,0.3) 70.0px,rgba(110,105,101,0) 73.0px)"></div>
<div class="a" style="left:640px;top:0;width:5px;height:72px;background:linear-gradient(to bottom,rgba(204,233,246,1) 0.0px,rgba(217,243,251,1) 18.0px,rgba(226,248,252,1) 38.0px,rgba(220,240,244,1) 46.0px,rgba(196,210,214,1) 53.0px,rgba(160,166,168,1) 60.0px,rgba(128,126,125,0.95) 65.0px,rgba(112,107,103,0.3) 70.0px,rgba(110,105,101,0) 73.0px)"></div>
<div class="a" style="left:645px;top:0;width:5px;height:72px;background:linear-gradient(to bottom,rgba(204,233,246,1) 0.0px,rgba(217,243,251,1) 18.0px,rgba(226,248,252,1) 38.0px,rgba(220,240,244,1) 46.0px,rgba(196,210,214,1) 53.0px,rgba(160,166,168,1) 60.0px,rgba(128,126,125,0.95) 65.0px,rgba(112,107,103,0.3) 70.0px,rgba(110,105,101,0) 73.0px)"></div>
<div class="a" style="left:650px;top:0;width:5px;height:72px;background:linear-gradient(to bottom,rgba(204,233,246,1) 0.0px,rgba(217,243,251,1) 18.0px,rgba(226,248,252,1) 38.0px,rgba(220,240,244,1) 46.0px,rgba(196,210,214,1) 53.0px,rgba(160,166,168,1) 60.0px,rgba(128,126,125,0.95) 65.0px,rgba(112,107,103,0.3) 70.0px,rgba(110,105,101,0) 73.0px)"></div>
<div class="a" style="left:655px;top:0;width:5px;height:72px;background:linear-gradient(to bottom,rgba(204,233,246,1) 0.0px,rgba(217,243,251,1) 18.0px,rgba(226,248,252,1) 38.0px,rgba(220,240,244,1) 46.0px,rgba(196,210,214,1) 53.0px,rgba(160,166,168,1) 60.0px,rgba(128,126,125,0.95) 65.0px,rgba(112,107,103,0.3) 70.0px,rgba(110,105,101,0) 73.0px)"></div>
<div class="a" style="left:660px;top:0;width:5px;height:72px;background:linear-gradient(to bottom,rgba(204,233,246,1) 0.0px,rgba(217,243,251,1) 18.0px,rgba(226,248,252,1) 38.0px,rgba(220,240,244,1) 46.0px,rgba(196,210,214,1) 53.0px,rgba(160,166,168,1) 60.0px,rgba(128,126,125,0.95) 65.0px,rgba(112,107,103,0.3) 70.0px,rgba(110,105,101,0) 73.0px)"></div>
<div class="a" style="left:665px;top:0;width:5px;height:72px;background:linear-gradient(to bottom,rgba(204,233,246,1) 0.0px,rgba(217,243,251,1) 18.0px,rgba(226,248,252,1) 38.0px,rgba(220,240,244,1) 46.0px,rgba(196,210,214,1) 53.0px,rgba(160,166,168,1) 60.0px,rgba(128,126,125,0.95) 65.0px,rgba(112,107,103,0.3) 70.0px,rgba(110,105,101,0) 73.0px)"></div>
<div class="a" style="left:670px;top:0;width:5px;height:72px;background:linear-gradient(to bottom,rgba(204,233,246,1) 0.0px,rgba(217,243,251,1) 18.0px,rgba(226,248,252,1) 38.0px,rgba(220,240,244,1) 46.0px,rgba(196,210,214,1) 53.0px,rgba(160,166,168,1) 60.0px,rgba(128,126,125,0.95) 65.0px,rgba(112,107,103,0.3) 70.0px,rgba(110,105,101,0) 73.0px)"></div>
<div class="a" style="left:675px;top:0;width:5px;height:72px;background:linear-gradient(to bottom,rgba(204,233,246,1) 0.0px,rgba(217,243,251,1) 18.0px,rgba(226,248,252,1) 38.0px,rgba(220,240,244,1) 46.0px,rgba(196,210,214,1) 53.0px,rgba(160,166,168,1) 60.0px,rgba(128,126,125,0.95) 65.0px,rgba(112,107,103,0.3) 70.0px,rgba(110,105,101,0) 73.0px)"></div>
<div class="a" style="left:680px;top:0;width:5px;height:72px;background:linear-gradient(to bottom,rgba(204,233,246,1) 0.0px,rgba(217,243,251,1) 18.0px,rgba(226,248,252,1) 38.0px,rgba(220,240,244,1) 46.0px,rgba(196,210,214,1) 53.0px,rgba(160,166,168,1) 60.0px,rgba(128,126,125,0.95) 65.0px,rgba(112,107,103,0.3) 70.0px,rgba(110,105,101,0) 73.0px)"></div>
<div class="a" style="left:685px;top:0;width:5px;height:72px;background:linear-gradient(to bottom,rgba(204,233,246,1) 0.0px,rgba(217,243,251,1) 18.0px,rgba(226,248,252,1) 38.0px,rgba(220,240,244,1) 46.0px,rgba(196,210,214,1) 53.0px,rgba(160,166,168,1) 60.0px,rgba(128,126,125,0.95) 65.0px,rgba(112,107,103,0.3) 70.0px,rgba(110,105,101,0) 73.0px)"></div>
<div class="a" style="left:690px;top:0;width:5px;height:72px;background:linear-gradient(to bottom,rgba(204,233,246,1) 0.0px,rgba(217,243,251,1) 18.0px,rgba(226,248,252,1) 38.0px,rgba(220,240,244,1) 46.0px,rgba(196,210,214,1) 53.0px,rgba(160,166,168,1) 60.0px,rgba(128,126,125,0.95) 65.0px,rgba(112,107,103,0.3) 70.0px,rgba(110,105,101,0) 73.0px)"></div>
<div class="a" style="left:695px;top:0;width:5px;height:72px;background:linear-gradient(to bottom,rgba(204,233,246,1) 0.0px,rgba(217,243,251,1) 18.0px,rgba(226,248,252,1) 38.0px,rgba(220,240,244,1) 46.0px,rgba(196,210,214,1) 53.0px,rgba(160,166,168,1) 60.0px,rgba(128,126,125,0.95) 65.0px,rgba(112,107,103,0.3) 70.0px,rgba(110,105,101,0) 73.0px)"></div>
<div class="a" style="left:700px;top:0;width:5px;height:72px;background:linear-gradient(to bottom,rgba(204,233,246,1) 0.0px,rgba(217,243,251,1) 18.0px,rgba(226,248,252,1) 38.0px,rgba(220,240,244,1) 46.0px,rgba(196,210,214,1) 53.0px,rgba(160,166,168,1) 60.0px,rgba(128,126,125,0.95) 65.0px,rgba(112,107,103,0.3) 70.0px,rgba(110,105,101,0) 73.0px)"></div>
<div class="a" style="left:705px;top:0;width:5px;height:72px;background:linear-gradient(to bottom,rgba(204,233,246,1) 0.0px,rgba(217,243,251,1) 18.0px,rgba(226,248,252,1) 38.0px,rgba(220,240,244,1) 46.0px,rgba(196,210,214,1) 53.0px,rgba(160,166,168,1) 60.0px,rgba(128,126,125,0.95) 65.0px,rgba(112,107,103,0.3) 70.0px,rgba(110,105,101,0) 73.0px)"></div>
<div class="a" style="left:710px;top:0;width:5px;height:72px;background:linear-gradient(to bottom,rgba(204,233,246,1) 0.0px,rgba(217,243,251,1) 18.0px,rgba(226,248,252,1) 38.0px,rgba(220,240,244,1) 46.0px,rgba(196,210,214,1) 53.0px,rgba(160,166,168,1) 60.0px,rgba(128,126,125,0.95) 65.0px,rgba(112,107,103,0.3) 70.0px,rgba(110,105,101,0) 73.0px)"></div>
<div class="a" style="left:715px;top:0;width:5px;height:72px;background:linear-gradient(to bottom,rgba(204,233,246,1) 0.0px,rgba(217,243,251,1) 18.0px,rgba(226,248,252,1) 38.0px,rgba(220,240,244,1) 46.0px,rgba(196,210,214,1) 53.0px,rgba(160,166,168,1) 60.0px,rgba(128,126,125,0.95) 65.0px,rgba(112,107,103,0.3) 70.0px,rgba(110,105,101,0) 73.0px)"></div>
<div class="a" style="left:720px;top:0;width:5px;height:72px;background:linear-gradient(to bottom,rgba(204,233,246,1) 0.0px,rgba(217,243,251,1) 18.0px,rgba(226,248,252,1) 38.0px,rgba(220,240,244,1) 46.0px,rgba(196,210,214,1) 53.0px,rgba(160,166,168,1) 60.0px,rgba(128,126,125,0.95) 65.0px,rgba(112,107,103,0.3) 70.0px,rgba(110,105,101,0) 73.0px)"></div>
<div class="a" style="left:725px;top:0;width:5px;height:72px;background:linear-gradient(to bottom,rgba(204,233,246,1) 0.0px,rgba(217,243,251,1) 18.0px,rgba(226,248,252,1) 38.0px,rgba(220,240,244,1) 46.0px,rgba(196,210,214,1) 53.0px,rgba(160,166,168,1) 60.0px,rgba(128,126,125,0.95) 65.0px,rgba(112,107,103,0.3) 70.0px,rgba(110,105,101,0) 73.0px)"></div>
<div class="a" style="left:730px;top:0;width:5px;height:72px;background:linear-gradient(to bottom,rgba(204,233,246,1) 0.0px,rgba(217,243,251,1) 18.0px,rgba(226,248,252,1) 38.0px,rgba(220,240,244,1) 46.0px,rgba(196,210,214,1) 53.0px,rgba(160,166,168,1) 60.0px,rgba(128,126,125,0.95) 65.0px,rgba(112,107,103,0.3) 70.0px,rgba(110,105,101,0) 73.0px)"></div>
<div class="a" style="left:735px;top:0;width:5px;height:72px;background:linear-gradient(to bottom,rgba(204,233,246,1) 0.0px,rgba(217,243,251,1) 18.0px,rgba(226,248,252,1) 38.0px,rgba(220,240,244,1) 46.0px,rgba(196,210,214,1) 53.0px,rgba(160,166,168,1) 60.0px,rgba(128,126,125,0.95) 65.0px,rgba(112,107,103,0.3) 70.0px,rgba(110,105,101,0) 73.0px)"></div>
<div class="a" style="left:740px;top:0;width:5px;height:72px;background:linear-gradient(to bottom,rgba(204,233,246,1) 0.0px,rgba(217,243,251,1) 18.0px,rgba(226,248,252,1) 38.0px,rgba(220,240,244,1) 46.0px,rgba(196,210,214,1) 53.0px,rgba(160,166,168,1) 60.0px,rgba(128,126,125,0.95) 65.0px,rgba(112,107,103,0.3) 70.0px,rgba(110,105,101,0) 73.0px)"></div>
<div class="a" style="left:745px;top:0;width:5px;height:72px;background:linear-gradient(to bottom,rgba(204,233,246,1) 0.0px,rgba(217,243,251,1) 18.0px,rgba(226,248,252,1) 38.0px,rgba(220,240,244,1) 46.0px,rgba(196,210,214,1) 53.0px,rgba(160,166,168,1) 60.0px,rgba(128,126,125,0.95) 65.0px,rgba(112,107,103,0.3) 70.0px,rgba(110,105,101,0) 73.0px)"></div>
<div class="a" style="left:750px;top:0;width:5px;height:72px;background:linear-gradient(to bottom,rgba(204,233,246,1) 0.0px,rgba(217,243,251,1) 18.0px,rgba(226,248,252,1) 38.0px,rgba(220,240,244,1) 46.0px,rgba(196,210,214,1) 53.0px,rgba(160,166,168,1) 60.0px,rgba(128,126,125,0.95) 65.0px,rgba(112,107,103,0.3) 70.0px,rgba(110,105,101,0) 73.0px)"></div>
<div class="a" style="left:755px;top:0;width:5px;height:72px;background:linear-gradient(to bottom,rgba(204,233,246,1) 0.0px,rgba(217,243,251,1) 18.0px,rgba(226,248,252,1) 38.0px,rgba(220,240,244,1) 46.0px,rgba(196,210,214,1) 53.0px,rgba(160,166,168,1) 60.0px,rgba(128,126,125,0.95) 65.0px,rgba(112,107,103,0.3) 70.0px,rgba(110,105,101,0) 73.0px)"></div>
<div class="a" style="left:760px;top:0;width:5px;height:72px;background:linear-gradient(to bottom,rgba(204,233,246,1) 0.0px,rgba(217,243,251,1) 18.0px,rgba(226,248,252,1) 38.0px,rgba(220,240,244,1) 46.0px,rgba(196,210,214,1) 53.0px,rgba(160,166,168,1) 60.0px,rgba(128,126,125,0.95) 65.0px,rgba(112,107,103,0.3) 70.0px,rgba(110,105,101,0) 73.0px)"></div>
<div class="a" style="left:765px;top:0;width:5px;height:72px;background:linear-gradient(to bottom,rgba(204,233,246,1) 0.0px,rgba(217,243,251,1) 18.0px,rgba(226,248,252,1) 38.0px,rgba(220,240,244,1) 46.0px,rgba(196,210,214,1) 53.0px,rgba(160,166,168,1) 60.0px,rgba(128,126,125,0.95) 65.0px,rgba(112,107,103,0.3) 70.0px,rgba(110,105,101,0) 73.0px)"></div>
<div class="a" style="left:770px;top:0;width:5px;height:72px;background:linear-gradient(to bottom,rgba(204,233,246,1) 0.0px,rgba(217,243,251,1) 18.0px,rgba(226,248,252,1) 38.0px,rgba(220,240,244,1) 46.0px,rgba(196,210,214,1) 53.0px,rgba(160,166,168,1) 60.0px,rgba(128,126,125,0.95) 65.0px,rgba(112,107,103,0.3) 70.0px,rgba(110,105,101,0) 73.0px)"></div>
<div class="a" style="left:775px;top:0;width:5px;height:72px;background:linear-gradient(to bottom,rgba(204,233,246,1) 0.0px,rgba(217,243,251,1) 18.0px,rgba(226,248,252,1) 38.0px,rgba(220,240,244,1) 46.0px,rgba(196,210,214,1) 53.0px,rgba(160,166,168,1) 60.0px,rgba(128,126,125,0.95) 65.0px,rgba(112,107,103,0.3) 70.0px,rgba(110,105,101,0) 73.0px)"></div>
<div class="a" style="left:780px;top:0;width:5px;height:72px;background:linear-gradient(to bottom,rgba(204,233,246,1) 0.0px,rgba(217,243,251,1) 18.0px,rgba(226,248,252,1) 38.0px,rgba(220,240,244,1) 46.0px,rgba(196,210,214,1) 53.0px,rgba(160,166,168,1) 60.0px,rgba(128,126,125,0.95) 65.0px,rgba(112,107,103,0.3) 70.0px,rgba(110,105,101,0) 73.0px)"></div>
<div class="a" style="left:785px;top:0;width:5px;height:72px;background:linear-gradient(to bottom,rgba(204,233,246,1) 0.0px,rgba(217,243,251,1) 18.0px,rgba(226,248,252,1) 38.0px,rgba(220,240,244,1) 46.0px,rgba(196,210,214,1) 53.0px,rgba(160,166,168,1) 60.0px,rgba(128,126,125,0.95) 65.0px,rgba(112,107,103,0.3) 70.0px,rgba(110,105,101,0) 73.0px)"></div>
<div class="a" style="left:790px;top:0;width:5px;height:72px;background:linear-gradient(to bottom,rgba(204,233,246,1) 0.0px,rgba(217,243,251,1) 18.0px,rgba(226,248,252,1) 38.0px,rgba(220,240,244,1) 46.0px,rgba(196,210,214,1) 53.0px,rgba(160,166,168,1) 60.0px,rgba(128,126,125,0.95) 65.0px,rgba(112,107,103,0.3) 70.0px,rgba(110,105,101,0) 73.0px)"></div>
<div class="a" style="left:795px;top:0;width:5px;height:72px;background:linear-gradient(to bottom,rgba(204,233,246,1) 0.0px,rgba(217,243,251,1) 18.1px,rgba(226,248,252,1) 38.1px,rgba(220,240,244,1) 46.1px,rgba(196,210,214,1) 53.1px,rgba(160,166,168,1) 60.1px,rgba(128,126,125,0.95) 65.1px,rgba(112,107,103,0.3) 70.1px,rgba(110,105,101,0) 73.1px)"></div>
<div class="a" style="left:800px;top:0;width:5px;height:72px;background:linear-gradient(to bottom,rgba(204,233,246,1) 0.0px,rgba(217,243,251,1) 18.1px,rgba(226,248,252,1) 38.1px,rgba(220,240,244,1) 46.1px,rgba(196,210,214,1) 53.1px,rgba(160,166,168,1) 60.1px,rgba(128,126,125,0.95) 65.1px,rgba(112,107,103,0.3) 70.1px,rgba(110,105,101,0) 73.1px)"></div>
<div class="a" style="left:805px;top:0;width:5px;height:72px;background:linear-gradient(to bottom,rgba(204,233,246,1) 0.0px,rgba(217,243,251,1) 18.1px,rgba(226,248,252,1) 38.1px,rgba(220,240,244,1) 46.1px,rgba(196,210,214,1) 53.1px,rgba(160,166,168,1) 60.1px,rgba(128,126,125,0.95) 65.1px,rgba(112,107,103,0.3) 70.1px,rgba(110,105,101,0) 73.1px)"></div>
<div class="a" style="left:810px;top:0;width:5px;height:72px;background:linear-gradient(to bottom,rgba(204,233,246,1) 0.0px,rgba(217,243,251,1) 18.2px,rgba(226,248,252,1) 38.2px,rgba(220,240,244,1) 46.2px,rgba(196,210,214,1) 53.2px,rgba(160,166,168,1) 60.2px,rgba(128,126,125,0.95) 65.2px,rgba(112,107,103,0.3) 70.2px,rgba(110,105,101,0) 73.2px)"></div>
<div class="a" style="left:815px;top:0;width:5px;height:72px;background:linear-gradient(to bottom,rgba(204,233,246,1) 0.0px,rgba(217,243,251,1) 18.2px,rgba(226,248,252,1) 38.2px,rgba(220,240,244,1) 46.2px,rgba(196,210,214,1) 53.2px,rgba(160,166,168,1) 60.2px,rgba(128,126,125,0.95) 65.2px,rgba(112,107,103,0.3) 70.2px,rgba(110,105,101,0) 73.2px)"></div>
<div class="a" style="left:820px;top:0;width:5px;height:72px;background:linear-gradient(to bottom,rgba(204,233,246,1) 0.0px,rgba(217,243,251,1) 18.2px,rgba(226,248,252,1) 38.2px,rgba(220,240,244,1) 46.2px,rgba(196,210,214,1) 53.2px,rgba(160,166,168,1) 60.2px,rgba(128,126,125,0.95) 65.2px,rgba(112,107,103,0.3) 70.2px,rgba(110,105,101,0) 73.2px)"></div>
<div class="a" style="left:825px;top:0;width:5px;height:72px;background:linear-gradient(to bottom,rgba(204,233,246,1) 0.0px,rgba(217,243,251,1) 18.3px,rgba(226,248,252,1) 38.3px,rgba(220,240,244,1) 46.3px,rgba(196,210,214,1) 53.3px,rgba(160,166,168,1) 60.3px,rgba(128,126,125,0.95) 65.3px,rgba(112,107,103,0.3) 70.3px,rgba(110,105,101,0) 73.3px)"></div>
<div class="a" style="left:830px;top:0;width:5px;height:72px;background:linear-gradient(to bottom,rgba(204,233,246,1) 0.0px,rgba(217,243,251,1) 18.3px,rgba(226,248,252,1) 38.3px,rgba(220,240,244,1) 46.3px,rgba(196,210,214,1) 53.3px,rgba(160,166,168,1) 60.3px,rgba(128,126,125,0.95) 65.3px,rgba(112,107,103,0.3) 70.3px,rgba(110,105,101,0) 73.3px)"></div>
<div class="a" style="left:835px;top:0;width:5px;height:72px;background:linear-gradient(to bottom,rgba(204,233,246,1) 0.0px,rgba(217,243,251,1) 18.3px,rgba(226,248,252,1) 38.3px,rgba(220,240,244,1) 46.3px,rgba(196,210,214,1) 53.3px,rgba(160,166,168,1) 60.3px,rgba(128,126,125,0.95) 65.3px,rgba(112,107,103,0.3) 70.3px,rgba(110,105,101,0) 73.3px)"></div>
<div class="a" style="left:840px;top:0;width:5px;height:72px;background:linear-gradient(to bottom,rgba(204,233,246,1) 0.0px,rgba(217,243,251,1) 18.4px,rgba(226,248,252,1) 38.4px,rgba(220,240,244,1) 46.4px,rgba(196,210,214,1) 53.4px,rgba(160,166,168,1) 60.4px,rgba(128,126,125,0.95) 65.4px,rgba(112,107,103,0.3) 70.4px,rgba(110,105,101,0) 73.4px)"></div>
<div class="a" style="left:845px;top:0;width:5px;height:72px;background:linear-gradient(to bottom,rgba(204,233,246,1) 0.0px,rgba(217,243,251,1) 18.4px,rgba(226,248,252,1) 38.4px,rgba(220,240,244,1) 46.4px,rgba(196,210,214,1) 53.4px,rgba(160,166,168,1) 60.4px,rgba(128,126,125,0.95) 65.4px,rgba(112,107,103,0.3) 70.4px,rgba(110,105,101,0) 73.4px)"></div>
<div class="a" style="left:850px;top:0;width:5px;height:72px;background:linear-gradient(to bottom,rgba(204,233,246,1) 0.0px,rgba(217,243,251,1) 18.4px,rgba(226,248,252,1) 38.4px,rgba(220,240,244,1) 46.4px,rgba(196,210,214,1) 53.4px,rgba(160,166,168,1) 60.4px,rgba(128,126,125,0.95) 65.4px,rgba(112,107,103,0.3) 70.4px,rgba(110,105,101,0) 73.4px)"></div>
<div class="a" style="left:855px;top:0;width:5px;height:72px;background:linear-gradient(to bottom,rgba(204,233,246,1) 0.0px,rgba(217,243,251,1) 18.5px,rgba(226,248,252,1) 38.5px,rgba(220,240,244,1) 46.5px,rgba(196,210,214,1) 53.5px,rgba(160,166,168,1) 60.5px,rgba(128,126,125,0.95) 65.5px,rgba(112,107,103,0.3) 70.5px,rgba(110,105,101,0) 73.5px)"></div>
<div class="a" style="left:860px;top:0;width:5px;height:72px;background:linear-gradient(to bottom,rgba(204,233,246,1) 0.0px,rgba(217,243,251,1) 18.5px,rgba(226,248,252,1) 38.5px,rgba(220,240,244,1) 46.5px,rgba(196,210,214,1) 53.5px,rgba(160,166,168,1) 60.5px,rgba(128,126,125,0.95) 65.5px,rgba(112,107,103,0.3) 70.5px,rgba(110,105,101,0) 73.5px)"></div>
<div class="a" style="left:865px;top:0;width:5px;height:72px;background:linear-gradient(to bottom,rgba(204,233,246,1) 0.0px,rgba(217,243,251,1) 18.5px,rgba(226,248,252,1) 38.5px,rgba(220,240,244,1) 46.5px,rgba(196,210,214,1) 53.5px,rgba(160,166,168,1) 60.5px,rgba(128,126,125,0.95) 65.5px,rgba(112,107,103,0.3) 70.5px,rgba(110,105,101,0) 73.5px)"></div>
<div class="a" style="left:870px;top:0;width:5px;height:72px;background:linear-gradient(to bottom,rgba(204,233,246,1) 0.0px,rgba(217,243,251,1) 18.6px,rgba(226,248,252,1) 38.6px,rgba(220,240,244,1) 46.6px,rgba(196,210,214,1) 53.6px,rgba(160,166,168,1) 60.6px,rgba(128,126,125,0.95) 65.6px,rgba(112,107,103,0.3) 70.6px,rgba(110,105,101,0) 73.6px)"></div>
<div class="a" style="left:875px;top:0;width:5px;height:72px;background:linear-gradient(to bottom,rgba(204,233,246,1) 0.0px,rgba(217,243,251,1) 18.6px,rgba(226,248,252,1) 38.6px,rgba(220,240,244,1) 46.6px,rgba(196,210,214,1) 53.6px,rgba(160,166,168,1) 60.6px,rgba(128,126,125,0.95) 65.6px,rgba(112,107,103,0.3) 70.6px,rgba(110,105,101,0) 73.6px)"></div>
<div class="a" style="left:880px;top:0;width:5px;height:72px;background:linear-gradient(to bottom,rgba(204,233,246,1) 0.0px,rgba(217,243,251,1) 18.6px,rgba(226,248,252,1) 38.6px,rgba(220,240,244,1) 46.6px,rgba(196,210,214,1) 53.6px,rgba(160,166,168,1) 60.6px,rgba(128,126,125,0.95) 65.6px,rgba(112,107,103,0.3) 70.6px,rgba(110,105,101,0) 73.6px)"></div>
<div class="a" style="left:885px;top:0;width:5px;height:72px;background:linear-gradient(to bottom,rgba(204,233,246,1) 0.0px,rgba(217,243,251,1) 18.7px,rgba(226,248,252,1) 38.7px,rgba(220,240,244,1) 46.7px,rgba(196,210,214,1) 53.7px,rgba(160,166,168,1) 60.7px,rgba(128,126,125,0.95) 65.7px,rgba(112,107,103,0.3) 70.7px,rgba(110,105,101,0) 73.7px)"></div>
<div class="a" style="left:890px;top:0;width:5px;height:72px;background:linear-gradient(to bottom,rgba(204,233,246,1) 0.0px,rgba(217,243,251,1) 18.7px,rgba(226,248,252,1) 38.7px,rgba(220,240,244,1) 46.7px,rgba(196,210,214,1) 53.7px,rgba(160,166,168,1) 60.7px,rgba(128,126,125,0.95) 65.7px,rgba(112,107,103,0.3) 70.7px,rgba(110,105,101,0) 73.7px)"></div>
<div class="a" style="left:895px;top:0;width:5px;height:72px;background:linear-gradient(to bottom,rgba(204,233,246,1) 0.0px,rgba(217,243,251,1) 18.7px,rgba(226,248,252,1) 38.7px,rgba(220,240,244,1) 46.7px,rgba(196,210,214,1) 53.7px,rgba(160,166,168,1) 60.7px,rgba(128,126,125,0.95) 65.7px,rgba(112,107,103,0.3) 70.7px,rgba(110,105,101,0) 73.7px)"></div>
<div class="a" style="left:900px;top:0;width:5px;height:72px;background:linear-gradient(to bottom,rgba(204,233,246,1) 0.0px,rgba(217,243,251,1) 18.8px,rgba(226,248,252,1) 38.8px,rgba(220,240,244,1) 46.8px,rgba(196,210,214,1) 53.8px,rgba(160,166,168,1) 60.8px,rgba(128,126,125,0.95) 65.8px,rgba(112,107,103,0.3) 70.8px,rgba(110,105,101,0) 73.8px)"></div>
<div class="a" style="left:905px;top:0;width:5px;height:72px;background:linear-gradient(to bottom,rgba(204,233,246,1) 0.0px,rgba(217,243,251,1) 18.8px,rgba(226,248,252,1) 38.8px,rgba(220,240,244,1) 46.8px,rgba(196,210,214,1) 53.8px,rgba(160,166,168,1) 60.8px,rgba(128,126,125,0.95) 65.8px,rgba(112,107,103,0.3) 70.8px,rgba(110,105,101,0) 73.8px)"></div>
<div class="a" style="left:910px;top:0;width:5px;height:72px;background:linear-gradient(to bottom,rgba(204,233,246,1) 0.0px,rgba(217,243,251,1) 18.8px,rgba(226,248,252,1) 38.8px,rgba(220,240,244,1) 46.8px,rgba(196,210,214,1) 53.8px,rgba(160,166,168,1) 60.8px,rgba(128,126,125,0.95) 65.8px,rgba(112,107,103,0.3) 70.8px,rgba(110,105,101,0) 73.8px)"></div>
<div class="a" style="left:915px;top:0;width:5px;height:72px;background:linear-gradient(to bottom,rgba(204,233,246,1) 0.0px,rgba(217,243,251,1) 18.9px,rgba(226,248,252,1) 38.9px,rgba(220,240,244,1) 46.9px,rgba(196,210,214,1) 53.9px,rgba(160,166,168,1) 60.9px,rgba(128,126,125,0.95) 65.9px,rgba(112,107,103,0.3) 70.9px,rgba(110,105,101,0) 73.9px)"></div>
<div class="a" style="left:920px;top:0;width:5px;height:72px;background:linear-gradient(to bottom,rgba(204,233,246,1) 0.0px,rgba(217,243,251,1) 18.9px,rgba(226,248,252,1) 38.9px,rgba(220,240,244,1) 46.9px,rgba(196,210,214,1) 53.9px,rgba(160,166,168,1) 60.9px,rgba(128,126,125,0.95) 65.9px,rgba(112,107,103,0.3) 70.9px,rgba(110,105,101,0) 73.9px)"></div>
<div class="a" style="left:925px;top:0;width:5px;height:72px;background:linear-gradient(to bottom,rgba(204,233,246,1) 0.0px,rgba(217,243,251,1) 18.9px,rgba(226,248,252,1) 38.9px,rgba(220,240,244,1) 46.9px,rgba(196,210,214,1) 53.9px,rgba(160,166,168,1) 60.9px,rgba(128,126,125,0.95) 65.9px,rgba(112,107,103,0.3) 70.9px,rgba(110,105,101,0) 73.9px)"></div>
<div class="a" style="left:930px;top:0;width:5px;height:72px;background:linear-gradient(to bottom,rgba(204,233,246,1) 0.0px,rgba(217,243,251,1) 19.0px,rgba(226,248,252,1) 39.0px,rgba(220,240,244,1) 47.0px,rgba(196,210,214,1) 54.0px,rgba(160,166,168,1) 61.0px,rgba(128,126,125,0.95) 66.0px,rgba(112,107,103,0.3) 71.0px,rgba(110,105,101,0) 74.0px)"></div>
<div class="a" style="left:935px;top:0;width:5px;height:73px;background:linear-gradient(to bottom,rgba(204,233,246,1) 0.0px,rgba(217,243,251,1) 19.0px,rgba(226,248,252,1) 39.0px,rgba(220,240,244,1) 47.0px,rgba(196,210,214,1) 54.0px,rgba(160,166,168,1) 61.0px,rgba(128,126,125,0.95) 66.0px,rgba(112,107,103,0.3) 71.0px,rgba(110,105,101,0) 74.0px)"></div>
<div class="a" style="left:940px;top:0;width:5px;height:73px;background:linear-gradient(to bottom,rgba(204,233,246,1) 0.0px,rgba(217,243,251,1) 19.0px,rgba(226,248,252,1) 39.0px,rgba(220,240,244,1) 47.0px,rgba(196,210,214,1) 54.0px,rgba(160,166,168,1) 61.0px,rgba(128,126,125,0.95) 66.0px,rgba(112,107,103,0.3) 71.0px,rgba(110,105,101,0) 74.0px)"></div>
<div class="a" style="left:945px;top:0;width:5px;height:73px;background:linear-gradient(to bottom,rgba(204,233,246,1) 0.0px,rgba(217,243,251,1) 19.0px,rgba(226,248,252,1) 39.0px,rgba(220,240,244,1) 47.0px,rgba(196,210,214,1) 54.0px,rgba(160,166,168,1) 61.0px,rgba(128,126,125,0.95) 66.0px,rgba(112,107,103,0.3) 71.0px,rgba(110,105,101,0) 74.0px)"></div>
<div class="a" style="left:950px;top:0;width:5px;height:73px;background:linear-gradient(to bottom,rgba(204,233,246,1) 0.0px,rgba(217,243,251,1) 19.0px,rgba(226,248,252,1) 39.0px,rgba(220,240,244,1) 47.0px,rgba(196,210,214,1) 54.0px,rgba(160,166,168,1) 61.0px,rgba(128,126,125,0.95) 66.0px,rgba(112,107,103,0.3) 71.0px,rgba(110,105,101,0) 74.0px)"></div>
<div class="a" style="left:955px;top:0;width:5px;height:73px;background:linear-gradient(to bottom,rgba(204,233,246,1) 0.0px,rgba(217,243,251,1) 19.0px,rgba(226,248,252,1) 39.0px,rgba(220,240,244,1) 47.0px,rgba(196,210,214,1) 54.0px,rgba(160,166,168,1) 61.0px,rgba(128,126,125,0.95) 66.0px,rgba(112,107,103,0.3) 71.0px,rgba(110,105,101,0) 74.0px)"></div>
<div class="a" style="left:960px;top:0;width:5px;height:73px;background:linear-gradient(to bottom,rgba(204,233,246,1) 0.0px,rgba(217,243,251,1) 19.0px,rgba(226,248,252,1) 39.0px,rgba(220,240,244,1) 47.0px,rgba(196,210,214,1) 54.0px,rgba(160,166,168,1) 61.0px,rgba(128,126,125,0.95) 66.0px,rgba(112,107,103,0.3) 71.0px,rgba(110,105,101,0) 74.0px)"></div>
<div class="a" style="left:965px;top:0;width:5px;height:73px;background:linear-gradient(to bottom,rgba(204,233,246,1) 0.0px,rgba(217,243,251,1) 19.0px,rgba(226,248,252,1) 39.0px,rgba(220,240,244,1) 47.0px,rgba(196,210,214,1) 54.0px,rgba(160,166,168,1) 61.0px,rgba(128,126,125,0.95) 66.0px,rgba(112,107,103,0.3) 71.0px,rgba(110,105,101,0) 74.0px)"></div>
<div class="a" style="left:970px;top:0;width:5px;height:73px;background:linear-gradient(to bottom,rgba(204,233,246,1) 0.0px,rgba(217,243,251,1) 19.0px,rgba(226,248,252,1) 39.0px,rgba(220,240,244,1) 47.0px,rgba(196,210,214,1) 54.0px,rgba(160,166,168,1) 61.0px,rgba(128,126,125,0.95) 66.0px,rgba(112,107,103,0.3) 71.0px,rgba(110,105,101,0) 74.0px)"></div>
<div class="a" style="left:975px;top:0;width:5px;height:73px;background:linear-gradient(to bottom,rgba(204,233,246,1) 0.0px,rgba(217,243,251,1) 19.0px,rgba(226,248,252,1) 39.0px,rgba(220,240,244,1) 47.0px,rgba(196,210,214,1) 54.0px,rgba(160,166,168,1) 61.0px,rgba(128,126,125,0.95) 66.0px,rgba(112,107,103,0.3) 71.0px,rgba(110,105,101,0) 74.0px)"></div>
<div class="a" style="left:980px;top:0;width:5px;height:73px;background:linear-gradient(to bottom,rgba(204,233,246,1) 0.0px,rgba(217,243,251,1) 19.0px,rgba(226,248,252,1) 39.0px,rgba(220,240,244,1) 47.0px,rgba(196,210,214,1) 54.0px,rgba(160,166,168,1) 61.0px,rgba(128,126,125,0.95) 66.0px,rgba(112,107,103,0.3) 71.0px,rgba(110,105,101,0) 74.0px)"></div>
<div class="a" style="left:985px;top:0;width:5px;height:73px;background:linear-gradient(to bottom,rgba(204,233,246,1) 0.0px,rgba(217,243,251,1) 19.0px,rgba(226,248,252,1) 39.0px,rgba(220,240,244,1) 47.0px,rgba(196,210,214,1) 54.0px,rgba(160,166,168,1) 61.0px,rgba(128,126,125,0.95) 66.0px,rgba(112,107,103,0.3) 71.0px,rgba(110,105,101,0) 74.0px)"></div>
<div class="a" style="left:990px;top:0;width:5px;height:73px;background:linear-gradient(to bottom,rgba(204,233,246,1) 0.0px,rgba(217,243,251,1) 19.0px,rgba(226,248,252,1) 39.0px,rgba(220,240,244,1) 47.0px,rgba(196,210,214,1) 54.0px,rgba(160,166,168,1) 61.0px,rgba(128,126,125,0.95) 66.0px,rgba(112,107,103,0.3) 71.0px,rgba(110,105,101,0) 74.0px)"></div>
<div class="a" style="left:995px;top:0;width:5px;height:73px;background:linear-gradient(to bottom,rgba(204,233,246,1) 0.0px,rgba(217,243,251,1) 19.0px,rgba(226,248,252,1) 39.0px,rgba(220,240,244,1) 47.0px,rgba(196,210,214,1) 54.0px,rgba(160,166,168,1) 61.0px,rgba(128,126,125,0.95) 66.0px,rgba(112,107,103,0.3) 71.0px,rgba(110,105,101,0) 74.0px)"></div>
<div class="a" style="left:1000px;top:0;width:5px;height:73px;background:linear-gradient(to bottom,rgba(204,233,246,1) 0.0px,rgba(217,243,251,1) 19.0px,rgba(226,248,252,1) 39.0px,rgba(220,240,244,1) 47.0px,rgba(196,210,214,1) 54.0px,rgba(160,166,168,1) 61.0px,rgba(128,126,125,0.95) 66.0px,rgba(112,107,103,0.3) 71.0px,rgba(110,105,101,0) 74.0px)"></div>
<div class="a" style="left:1005px;top:0;width:5px;height:73px;background:linear-gradient(to bottom,rgba(204,233,246,1) 0.0px,rgba(217,243,251,1) 19.0px,rgba(226,248,252,1) 39.0px,rgba(220,240,244,1) 47.0px,rgba(196,210,214,1) 54.0px,rgba(160,166,168,1) 61.0px,rgba(128,126,125,0.95) 66.0px,rgba(112,107,103,0.3) 71.0px,rgba(110,105,101,0) 74.0px)"></div>
<div class="a" style="left:1010px;top:0;width:5px;height:73px;background:linear-gradient(to bottom,rgba(204,233,246,1) 0.0px,rgba(217,243,251,1) 19.0px,rgba(226,248,252,1) 39.0px,rgba(220,240,244,1) 47.0px,rgba(196,210,214,1) 54.0px,rgba(160,166,168,1) 61.0px,rgba(128,126,125,0.95) 66.0px,rgba(112,107,103,0.3) 71.0px,rgba(110,105,101,0) 74.0px)"></div>
<div class="a" style="left:1015px;top:0;width:5px;height:73px;background:linear-gradient(to bottom,rgba(204,233,246,1) 0.0px,rgba(217,243,251,1) 19.0px,rgba(226,248,252,1) 39.0px,rgba(220,240,244,1) 47.0px,rgba(196,210,214,1) 54.0px,rgba(160,166,168,1) 61.0px,rgba(128,126,125,0.95) 66.0px,rgba(112,107,103,0.3) 71.0px,rgba(110,105,101,0) 74.0px)"></div>
<div class="a" style="left:1020px;top:0;width:5px;height:73px;background:linear-gradient(to bottom,rgba(204,233,246,1) 0.0px,rgba(217,243,251,1) 19.0px,rgba(226,248,252,1) 39.0px,rgba(220,240,244,1) 47.0px,rgba(196,210,214,1) 54.0px,rgba(160,166,168,1) 61.0px,rgba(128,126,125,0.95) 66.0px,rgba(112,107,103,0.3) 71.0px,rgba(110,105,101,0) 74.0px)"></div>
<div class="a" style="left:1025px;top:0;width:5px;height:73px;background:linear-gradient(to bottom,rgba(204,233,246,1) 0.0px,rgba(217,243,251,1) 19.0px,rgba(226,248,252,1) 39.0px,rgba(220,240,244,1) 47.0px,rgba(196,210,214,1) 54.0px,rgba(160,166,168,1) 61.0px,rgba(128,126,125,0.95) 66.0px,rgba(112,107,103,0.3) 71.0px,rgba(110,105,101,0) 74.0px)"></div>
<div class="a" style="left:1030px;top:0;width:5px;height:73px;background:linear-gradient(to bottom,rgba(204,233,246,1) 0.0px,rgba(217,243,251,1) 19.0px,rgba(226,248,252,1) 39.0px,rgba(220,240,244,1) 47.0px,rgba(196,210,214,1) 54.0px,rgba(160,166,168,1) 61.0px,rgba(128,126,125,0.95) 66.0px,rgba(112,107,103,0.3) 71.0px,rgba(110,105,101,0) 74.0px)"></div>
<div class="a" style="left:1035px;top:0;width:5px;height:73px;background:linear-gradient(to bottom,rgba(204,233,246,1) 0.0px,rgba(217,243,251,1) 19.0px,rgba(226,248,252,1) 39.0px,rgba(220,240,244,1) 47.0px,rgba(196,210,214,1) 54.0px,rgba(160,166,168,1) 61.0px,rgba(128,126,125,0.95) 66.0px,rgba(112,107,103,0.3) 71.0px,rgba(110,105,101,0) 74.0px)"></div>
<div class="a" style="left:1040px;top:0;width:5px;height:73px;background:linear-gradient(to bottom,rgba(204,233,246,1) 0.0px,rgba(217,243,251,1) 19.0px,rgba(226,248,252,1) 39.0px,rgba(220,240,244,1) 47.0px,rgba(196,210,214,1) 54.0px,rgba(160,166,168,1) 61.0px,rgba(128,126,125,0.95) 66.0px,rgba(112,107,103,0.3) 71.0px,rgba(110,105,101,0) 74.0px)"></div>
<div class="a" style="left:1045px;top:0;width:5px;height:73px;background:linear-gradient(to bottom,rgba(204,233,246,1) 0.0px,rgba(217,243,251,1) 19.0px,rgba(226,248,252,1) 39.0px,rgba(220,240,244,1) 47.0px,rgba(196,210,214,1) 54.0px,rgba(160,166,168,1) 61.0px,rgba(128,126,125,0.95) 66.0px,rgba(112,107,103,0.3) 71.0px,rgba(110,105,101,0) 74.0px)"></div>
<div class="a" style="left:1050px;top:0;width:5px;height:73px;background:linear-gradient(to bottom,rgba(204,233,246,1) 0.0px,rgba(217,243,251,1) 19.0px,rgba(226,248,252,1) 39.0px,rgba(220,240,244,1) 47.0px,rgba(196,210,214,1) 54.0px,rgba(160,166,168,1) 61.0px,rgba(128,126,125,0.95) 66.0px,rgba(112,107,103,0.3) 71.0px,rgba(110,105,101,0) 74.0px)"></div>
<div class="a" style="left:1055px;top:0;width:5px;height:73px;background:linear-gradient(to bottom,rgba(204,233,246,1) 0.0px,rgba(217,243,251,1) 19.0px,rgba(226,248,252,1) 39.0px,rgba(220,240,244,1) 47.0px,rgba(196,210,214,1) 54.0px,rgba(160,166,168,1) 61.0px,rgba(128,126,125,0.95) 66.0px,rgba(112,107,103,0.3) 71.0px,rgba(110,105,101,0) 74.0px)"></div>
<div class="a" style="left:1060px;top:0;width:5px;height:73px;background:linear-gradient(to bottom,rgba(204,233,246,1) 0.0px,rgba(217,243,251,1) 19.0px,rgba(226,248,252,1) 39.0px,rgba(220,240,244,1) 47.0px,rgba(196,210,214,1) 54.0px,rgba(160,166,168,1) 61.0px,rgba(128,126,125,0.95) 66.0px,rgba(112,107,103,0.3) 71.0px,rgba(110,105,101,0) 74.0px)"></div>
<div class="a" style="left:1065px;top:0;width:5px;height:73px;background:linear-gradient(to bottom,rgba(204,233,246,1) 0.0px,rgba(217,243,251,1) 19.0px,rgba(226,248,252,1) 39.0px,rgba(220,240,244,1) 47.0px,rgba(196,210,214,1) 54.0px,rgba(160,166,168,1) 61.0px,rgba(128,126,125,0.95) 66.0px,rgba(112,107,103,0.3) 71.0px,rgba(110,105,101,0) 74.0px)"></div>
<div class="a" style="left:1070px;top:0;width:5px;height:73px;background:linear-gradient(to bottom,rgba(204,233,246,1) 0.0px,rgba(217,243,251,1) 19.0px,rgba(226,248,252,1) 39.0px,rgba(220,240,244,1) 47.0px,rgba(196,210,214,1) 54.0px,rgba(160,166,168,1) 61.0px,rgba(128,126,125,0.95) 66.0px,rgba(112,107,103,0.3) 71.0px,rgba(110,105,101,0) 74.0px)"></div>
<div class="a" style="left:1075px;top:0;width:5px;height:73px;background:linear-gradient(to bottom,rgba(204,233,246,1) 0.0px,rgba(217,243,251,1) 19.0px,rgba(226,248,252,1) 39.0px,rgba(220,240,244,1) 47.0px,rgba(196,210,214,1) 54.0px,rgba(160,166,168,1) 61.0px,rgba(128,126,125,0.95) 66.0px,rgba(112,107,103,0.3) 71.0px,rgba(110,105,101,0) 74.0px)"></div>
<div class="a" style="left:1080px;top:0;width:5px;height:73px;background:linear-gradient(to bottom,rgba(204,233,246,1) 0.0px,rgba(217,243,251,1) 19.0px,rgba(226,248,252,1) 39.0px,rgba(220,240,244,1) 47.0px,rgba(196,210,214,1) 54.0px,rgba(160,166,168,1) 61.0px,rgba(128,126,125,0.95) 66.0px,rgba(112,107,103,0.3) 71.0px,rgba(110,105,101,0) 74.0px)"></div>
<div class="a" style="left:1085px;top:0;width:5px;height:73px;background:linear-gradient(to bottom,rgba(204,233,246,1) 0.0px,rgba(217,243,251,1) 19.0px,rgba(226,248,252,1) 39.0px,rgba(220,240,244,1) 47.0px,rgba(196,210,214,1) 54.0px,rgba(160,166,168,1) 61.0px,rgba(128,126,125,0.95) 66.0px,rgba(112,107,103,0.3) 71.0px,rgba(110,105,101,0) 74.0px)"></div>
<div class="a" style="left:1090px;top:0;width:5px;height:73px;background:linear-gradient(to bottom,rgba(204,233,246,1) 0.0px,rgba(217,243,251,1) 19.0px,rgba(226,248,252,1) 39.0px,rgba(220,240,244,1) 47.0px,rgba(196,210,214,1) 54.0px,rgba(160,166,168,1) 61.0px,rgba(128,126,125,0.95) 66.0px,rgba(112,107,103,0.3) 71.0px,rgba(110,105,101,0) 74.0px)"></div>
<div class="a" style="left:1095px;top:0;width:5px;height:73px;background:linear-gradient(to bottom,rgba(204,233,246,1) 0.0px,rgba(217,243,251,1) 19.0px,rgba(226,248,252,1) 39.0px,rgba(220,240,244,1) 47.0px,rgba(196,210,214,1) 54.0px,rgba(160,166,168,1) 61.0px,rgba(128,126,125,0.95) 66.0px,rgba(112,107,103,0.3) 71.0px,rgba(110,105,101,0) 74.0px)"></div>
</div>
<div class="a" style="left:364px;top:50px;width:1100px;height:45px;background:radial-gradient(ellipse 560px 40px at 640px 0px,rgba(176,204,226,0.5),rgba(176,204,226,0))"></div>

<!-- scene objects -->
<svg style="left:0;top:0" width="1467" height="676">
  <!-- camera gizmo -->
  <g fill="#f4f4f4"><circle cx="791.2" cy="232.8" r="2.6"/><circle cx="796.3" cy="230" r="2.8"/><rect x="792" y="230.5" width="8" height="7"/><path d="M800 233l3.5-1.5v5l-3.5-1.5z"/></g>
  <!-- sun -->
  <g stroke="#e9dfbb" stroke-linecap="butt">
    <path d="M919.60 237.10L924.70 237.10M914.00 242.70L914.00 247.80M908.40 237.10L903.30 237.10M914.00 231.50L914.00 226.40" stroke-width="2.2"/>
    <path d="M918.24 241.34L921.07 244.17M909.76 241.34L906.93 244.17M909.76 232.86L906.93 230.03M918.24 232.86L921.07 230.03" stroke-width="2"/>
    <path d="M919.73 239.47L921.95 240.39M916.37 242.83L917.29 245.05M911.63 242.83L910.71 245.05M908.27 239.47L906.05 240.39M908.27 234.73L906.05 233.81M911.63 231.37L910.71 229.15M916.37 231.37L917.29 229.15M919.73 234.73L921.95 233.81" stroke-width="1.6"/>
  </g>
  <circle cx="914" cy="237.1" r="4.1" fill="#f5efcf"/>
  <!-- cube -->
  <path d="M913.3 283.7L928.8 291.4L914 297.6L898.5 291.4Z" fill="#efefef"/>
  <path d="M898.5 291.4L914 297.6V317.8L898.5 310Z" fill="#d3d7dd"/>
  <path d="M914 297.6L928.8 291.4V310L914 317.8Z" fill="#8c9cb4"/>
  <!-- orientation gizmo -->
  <g>
    <path d="M1398 109.5L1380 97.5L1380 111.5Z" fill="#bdbdbd"/>
    <ellipse cx="1380" cy="104.5" rx="3" ry="7" fill="#d9d9d9"/>
    <path d="M1405 109.5L1423 97.5L1423 111.5Z" fill="#bdbdbd"/>
    <ellipse cx="1423" cy="104.5" rx="3" ry="7" fill="#d9d9d9"/>
    <path d="M1401.5 119L1395 143L1408 143Z" fill="#c8c8c8"/>
    <ellipse cx="1401.5" cy="143" rx="6.5" ry="2.3" fill="#dadada"/>
    <circle cx="1401.5" cy="114" r="11" fill="#cfcfcf"/>
    <path d="M1390.5 112a11 11 0 0 1 22 0a11 6 0 0 0-22 0z" fill="#a9a9a9"/>
    <path d="M1392 77.5L1411 77.5L1401.5 103Z" fill="#3cb81a"/>
    <ellipse cx="1401.5" cy="77.5" rx="9.5" ry="2.2" fill="#55d22e"/>
    <path d="M1394 117L1366 117.5L1373 137.5Z" fill="#b81616"/>
    <ellipse cx="1369.5" cy="127.5" rx="4.6" ry="10.5" transform="rotate(-22 1369.5 127.5)" fill="#9c1010"/>
    <path d="M1409 117L1437 117.5L1430 137.5Z" fill="#1c34d8"/>
    <ellipse cx="1433.5" cy="127.5" rx="4.6" ry="10.5" transform="rotate(22 1433.5 127.5)" fill="#1426b8"/>
  </g>
  <g fill="#ffffff" font-family="Liberation Sans" font-weight="bold" font-size="13">
    <text x="1395.5" y="70.5">y</text>
    <text x="1351.5" y="137">x</text>
    <text x="1439.5" y="137">z</text>
  </g>
  <g fill="#bdbdbd" opacity="0.4"><rect x="1440" y="70" width="10" height="7" rx="1"/><path d="M1442 70.5v-2a3 3 0 0 1 6 0v2" fill="none" stroke="#bdbdbd" stroke-width="1.3"/></g>
  <path d="M1383 169.3l-12 6.2l12 6.2M1371.5 175.5h11" fill="none" stroke="#d4d4d4" stroke-width="1.2" opacity="0.85"/>
  <text x="1387.6" y="180.7" font-family="Liberation Sans" font-size="14" fill="#d6d6d6" letter-spacing="0.5" opacity="0.9">Persp</text>
</svg>

<!-- ================= PROJECT ================= -->
<div class="a" style="left:0;top:553px;width:1464px;height:24px;background:#282828"></div>
<div class="a" style="left:0;top:553px;width:102px;height:24px;background:#3c3c3c;border-top-right-radius:3px"></div>
<div class="a" style="left:102px;top:553px;width:190px;height:24px;background:#2e2e2e"></div>
<svg style="left:0;top:553px" width="300" height="24">
  <path d="M8 6h5l2 2h8v10h-15z" fill="#c4c4c4"/>
  <path d="M114.3 8.5h11v10h-11z M114.3 13.5h11" fill="none" stroke="#c4c4c4" stroke-width="1.3"/>
</svg>
<svg style="left:1400px;top:553px" width="67" height="24">
  <path d="M22.6 12.2h9v4.6h-9z M30.9 12.2V7Q30.9 5.6 29.5 5.6H24.4V7.2" fill="none" stroke="#cfcfcf" stroke-width="1.25"/>
  <g fill="#c8c8c8"><circle cx="47.9" cy="6.1" r="1.5"/><circle cx="47.9" cy="10.9" r="1.5"/><circle cx="47.9" cy="15.7" r="1.5"/></g>
</svg>

<div class="a" style="left:0;top:577px;width:1464px;height:26px;background:#3c3c3c;border-bottom:1px solid #242424"></div>
<svg style="left:0;top:577px" width="54" height="25">
  <path d="M16 5v16M8 13h16" stroke="#c8c8c8" stroke-width="2"/>
  <path d="M29 9h9l-4.5 5.5z" fill="#c4c4c4"/>
</svg>
<div class="a" style="left:946px;top:579px;width:376px;height:20px;background:#2a2a2a;border:1px solid #1d1d1d;border-top-color:#131313;border-radius:5px"></div>
<svg style="left:946px;top:580px" width="30" height="19">
  <circle cx="10" cy="8" r="2.6" fill="none" stroke="#c0c0c0" stroke-width="1.4"/>
  <path d="M11.8 10l2.7 2.7" stroke="#c0c0c0" stroke-width="1.6"/>
</svg>
<div class="a" style="left:1324px;top:577px;width:1px;height:25px;background:#2c2c2c"></div>
<div class="a" style="left:1356px;top:577px;width:1px;height:25px;background:#2c2c2c"></div>
<div class="a" style="left:1389px;top:577px;width:1px;height:25px;background:#2c2c2c"></div>
<div class="a" style="left:1421px;top:577px;width:1px;height:25px;background:#2c2c2c"></div>
<svg style="left:0;top:577px" width="1467" height="25">
  <g fill="#c4c4c4">
    <rect x="1334" y="3" width="7" height="7"/><path d="M1343.3 7L1347.3 14.2H1339.6Z"/><circle cx="1336.5" cy="15" r="4.3"/>
    <path d="M1364.8 12.6L1371.2 6.2H1377.2V12.2L1370.8 18.6Z"/>
  </g>
  <circle cx="1374.3" cy="9.1" r="1.1" fill="#3c3c3c"/>
  <path d="M1405 5l2.2 4.6l5 0.6l-3.7 3.4l1 5l-4.5-2.5l-4.5 2.5l1-5l-3.7-3.4l5-0.6z" fill="#8a8a8a"/>
  <g fill="none" stroke="#cccccc" stroke-width="1.2"><path d="M1429 11.8Q1437.3 3.5 1445.6 11.8Q1437.3 20 1429 11.8Z"/></g>
  <path d="M1432.5 10.5Q1435.5 7.5 1439 8L1434 14Q1432.3 12.3 1432.5 10.5Z" fill="#cccccc"/>
  <path d="M1430.5 18L1444.5 4.5" stroke="#3c3c3c" stroke-width="3"/>
  <path d="M1430.5 18L1444.5 4.5" stroke="#cccccc" stroke-width="1.4"/>
</svg>

<div class="a" style="left:0;top:603px;width:259px;height:73px;background:#383838"></div>
<div class="a" style="left:259px;top:603px;width:1px;height:73px;background:#242424"></div>
<div class="a" style="left:260px;top:603px;width:1204px;height:25px;background:#3e3e3e;border-bottom:1px solid #2a2a2a"></div>
<div class="a" style="left:260px;top:628px;width:1204px;height:48px;background:#333333"></div>
<div class="a" style="left:0;top:642px;width:259px;height:20px;background:#4b4b4b"></div>
<svg style="left:0;top:603px" width="259" height="73">
  <path d="M6.2 5L15.2 10L6.2 15z" fill="#6a6a6a"/>
  <path d="M30 3.6l2.2 4.4l4.8 0.7l-3.5 3.4l0.85 4.8l-4.35-2.3l-4.35 2.3l0.85-4.8l-3.5-3.4l4.8-0.7z" fill="#f5c211" stroke="#f5c211" stroke-width="0.8" stroke-linejoin="round"/>
  <path d="M5 44.8h10.2l-5.1 8.9z" fill="#6e6e6e"/>
  <g fill="none" stroke="#c4c4c4" stroke-width="1.3" stroke-linejoin="round"><path d="M23.7 54.5V43.6H28.4L30.4 45.4H36.4V47"/></g>
  <path d="M24 54.9L27.6 47.6H39.3L36 54.9Z" fill="#c4c4c4"/>
  <path d="M40 64h5l2 2h7v7h-14z" fill="#c4c4c4"/>
</svg>

<div class="t" style="left:28.5px;top:5.14px;font-size:15px;font-weight:normal;letter-spacing:0.45px;color:#c8c8c8">Hierarchy</div>
<div class="t" style="left:77.2px;top:29.36px;font-size:14px;font-weight:normal;letter-spacing:0.0px;color:#7c7c7c">All</div>
<div class="t" style="left:81.5px;top:52.34px;font-size:15px;font-weight:bold;letter-spacing:0.45px;color:#dcdcdc">SampleScene*</div>
<div class="t" style="left:97.3px;top:72.14px;font-size:15px;font-weight:normal;letter-spacing:0.36px;color:#c8c8c8">Main Camera</div>
<div class="t" style="left:97.3px;top:92.14px;font-size:15px;font-weight:normal;letter-spacing:0.55px;color:#c8c8c8">Directional Light</div>
<div class="t" style="left:97.3px;top:112.14px;font-size:15px;font-weight:normal;letter-spacing:0.3px;color:#c8c8c8">Cube</div>
<div class="t" style="left:394.4px;top:6.30px;font-size:14.5px;font-weight:normal;letter-spacing:0.75px;color:#c8c8c8">Scene</div>
<div class="t" style="left:492.6px;top:6.30px;font-size:14.5px;font-weight:normal;letter-spacing:0.3px;color:#c8c8c8">Game</div>
<div class="t" style="left:369.7px;top:28.94px;font-size:15px;font-weight:normal;letter-spacing:0.6px;color:#c8c8c8">Shaded</div>
<div class="t" style="left:530.6px;top:29.91px;font-size:13.5px;font-weight:bold;letter-spacing:-0.6px;color:#c8c8c8">2D</div>
<div class="t" style="left:708.0px;top:29.44px;font-size:15px;font-weight:normal;letter-spacing:0.0px;color:#c4c4c4">0</div>
<div class="t" style="left:1112.6px;top:29.44px;font-size:15px;font-weight:normal;letter-spacing:0.5px;color:#c8c8c8">Gizmos</div>
<div class="t" style="left:1228.6px;top:29.55px;font-size:14px;font-weight:normal;letter-spacing:0.0px;color:#7c7c7c">All</div>
<div class="t" style="left:28.3px;top:559.44px;font-size:15px;font-weight:normal;letter-spacing:0.6px;color:#c8c8c8">Project</div>
<div class="t" style="left:132px;top:559.44px;font-size:15px;font-weight:normal;letter-spacing:0.6px;color:#c4c4c4">Console</div>
<div class="t" style="left:1448.3px;top:582.24px;font-size:15px;font-weight:normal;letter-spacing:0.0px;color:#c8c8c8">9</div>
<div class="t" style="left:44.4px;top:605.14px;font-size:15px;font-weight:bold;letter-spacing:0.19px;color:#d2d2d2">Favorites</div>
<div class="t" style="left:44.4px;top:644.24px;font-size:15px;font-weight:bold;letter-spacing:0.4px;color:#d2d2d2">Assets</div>
<div class="t" style="left:60.6px;top:663.84px;font-size:15px;font-weight:normal;letter-spacing:0.5px;color:#c8c8c8">Scenes</div>
<div class="t" style="left:265.3px;top:608.24px;font-size:15px;font-weight:bold;letter-spacing:0.4px;color:#c4c4c4">Assets</div>
<!-- ================= CONTEXT MENU ================= -->
<div class="menu" style="left:81px;top:158px;width:211px;height:408px"></div>
<div class="sep" style="left:112px;top:252px;width:176px"></div>
<div class="sep" style="left:112px;top:325px;width:176px"></div>
<div class="sep" style="left:112px;top:354px;width:176px"></div>
<div class="sep" style="left:112px;top:383px;width:176px"></div>
<div class="a" style="left:84px;top:408px;width:204px;height:22px;background:#91c9f7"></div>
<svg style="left:0;top:0" width="300" height="600">
  <g fill="none" stroke="#404040" stroke-width="1.2">
    <path d="M275.5 415.5l4 4l-4 4"/>
    <path d="M275.5 437.5l4 4l-4 4"/>
    <path d="M275.5 459.5l4 4l-4 4"/>
    <path d="M275.5 481.5l4 4l-4 4"/>
    <path d="M275.5 503.5l4 4l-4 4"/>
    <path d="M275.5 547.5l4 4l-4 4"/>
  </g>
</svg>

<div class="menu" style="left:286px;top:405px;width:203px;height:280px"></div>
<div class="a" style="left:287px;top:673px;width:201px;height:1px;background:#cfcfcf"></div>
<div class="a" style="left:287px;top:674px;width:201px;height:2px;background:#e4e4e4"></div>
<div class="a" style="left:289px;top:408px;width:197px;height:23px;background:#91c9f7"></div>

<div class="mi dis" style="left:116.5px;top:166.12px;font-size:12.5px">Cut</div>
<div class="mi dis" style="left:116.5px;top:188.12px;font-size:12.5px">Copy</div>
<div class="mi dis" style="left:116.5px;top:210.12px;font-size:12.5px">Paste</div>
<div class="mi dis" style="left:116.5px;top:232.12px;font-size:12.5px">Paste As Child</div>
<div class="mi dis" style="left:116.5px;top:261.12px;font-size:12.5px">Rename</div>
<div class="mi dis" style="left:116.5px;top:283.12px;font-size:12.5px">Duplicate</div>
<div class="mi dis" style="left:116.5px;top:305.12px;font-size:12.5px">Delete</div>
<div class="mi dis" style="left:116.5px;top:334.12px;font-size:12.5px">Select Children</div>
<div class="mi dis" style="left:116.5px;top:363.12px;font-size:12.5px">Set as Default Parent</div>
<div class="mi" style="left:116.5px;top:391.00px;font-size:13px">Create Empty</div>
<div class="mi" style="left:116.5px;top:413.00px;font-size:13px">3D Object</div>
<div class="mi" style="left:116.5px;top:435.00px;font-size:13px">Effects</div>
<div class="mi" style="left:116.5px;top:457.00px;font-size:13px">Light</div>
<div class="mi" style="left:116.5px;top:479.00px;font-size:13px">Audio</div>
<div class="mi" style="left:116.5px;top:501.00px;font-size:13px">Video</div>
<div class="mi" style="left:116.5px;top:523.00px;font-size:13px">Camera</div>
<div class="mi" style="left:116.5px;top:545.00px;font-size:13px">UI</div>
<div class="mi" style="left:321.4px;top:413.00px">Cube</div>
<div class="mi" style="left:321.4px;top:435.00px">Sphere</div>
<div class="mi" style="left:321.4px;top:457.00px">Capsule</div>
<div class="mi" style="left:321.4px;top:479.00px">Cylinder</div>
<div class="mi" style="left:321.4px;top:501.00px">Plane</div>
<div class="mi" style="left:321.4px;top:523.00px">Quad</div>
<div class="mi" style="left:321.4px;top:545.00px">Text - TextMeshPro</div>
<div class="mi" style="left:321.4px;top:567.00px">Ragdoll...</div>
<div class="mi" style="left:321.4px;top:589.00px">Terrain</div>
<div class="mi" style="left:321.4px;top:611.00px">Tree</div>
<div class="mi" style="left:321.4px;top:633.00px">Wind Zone</div>
<div class="mi" style="left:321.4px;top:655.00px">3D Text</div>
<!-- red boxes -->
<div class="a" style="left:82px;top:405.5px;width:204px;height:29px;border:4px solid #f20c0c;border-radius:1.5px"></div>
<div class="a" style="left:286px;top:405px;width:206px;height:30.5px;border:4px solid #f20c0c;border-radius:1.5px"></div>

</body></html>
